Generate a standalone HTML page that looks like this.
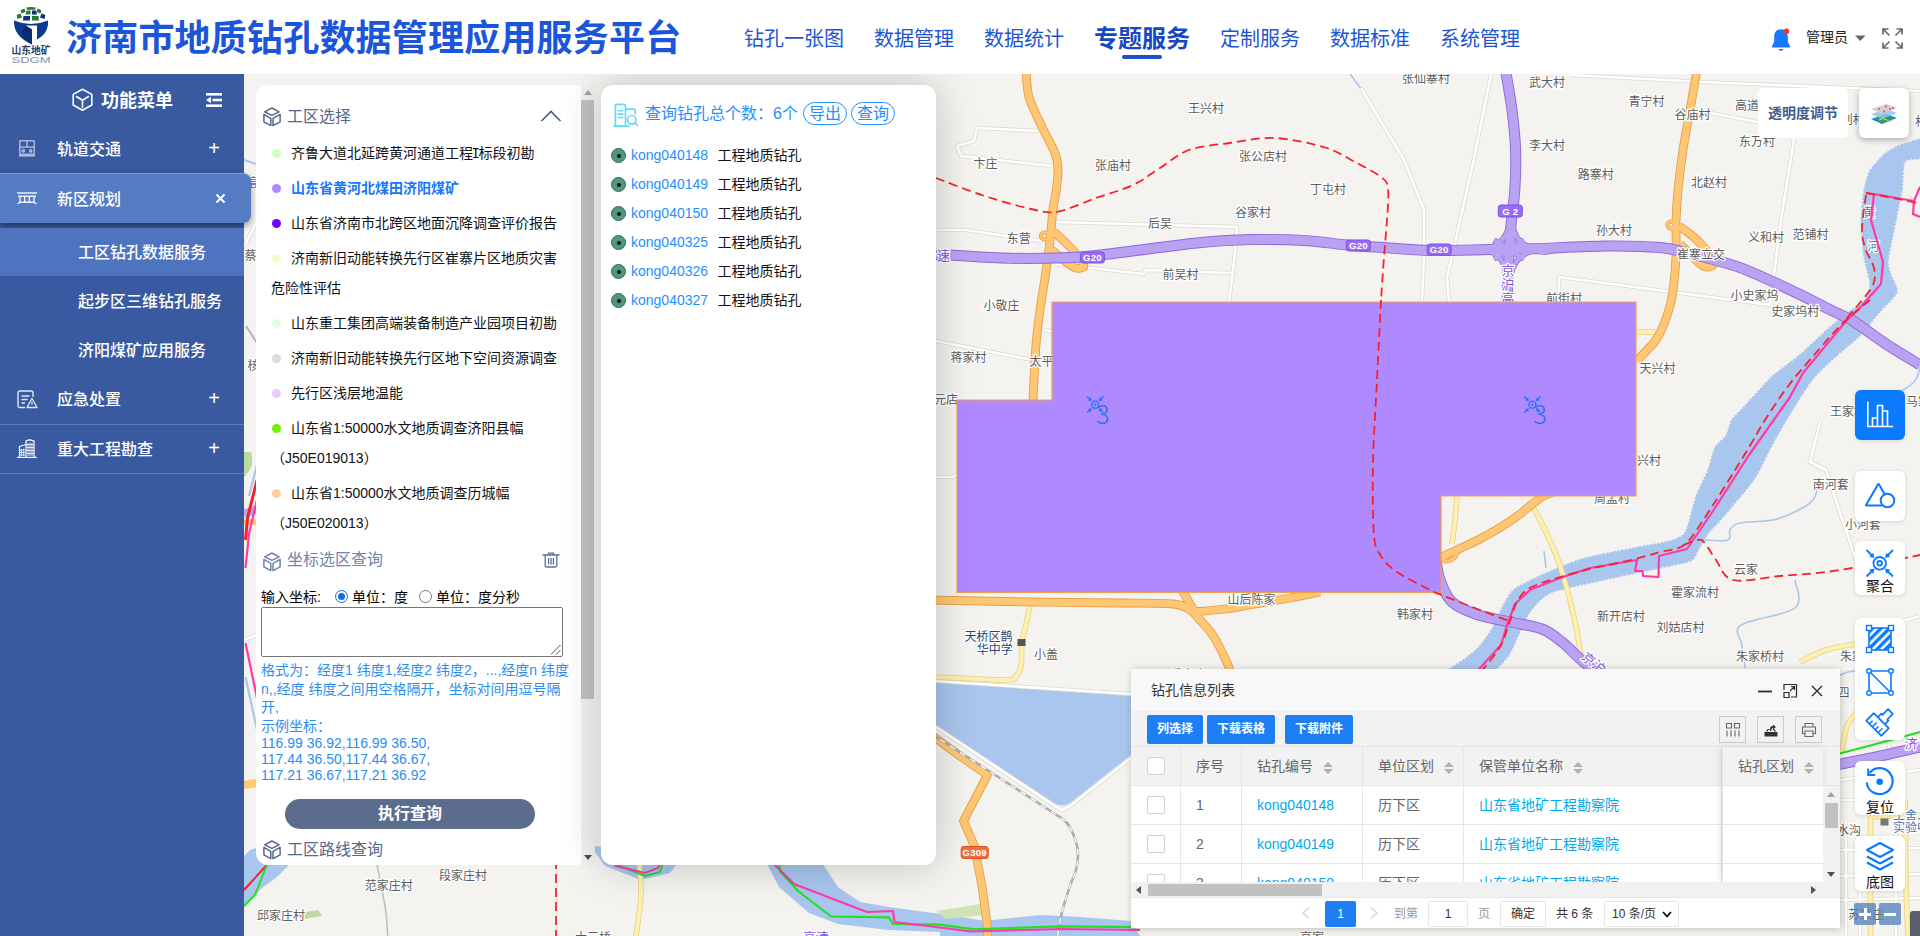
<!DOCTYPE html>
<html lang="zh-CN">
<head>
<meta charset="utf-8">
<title>济南市地质钻孔数据管理应用服务平台</title>
<style>
*{box-sizing:border-box;margin:0;padding:0}
html,body{width:1920px;height:936px;overflow:hidden;background:#f5f3ef;font-family:"Liberation Sans","Noto Sans CJK SC",sans-serif;color:#222}
#map{position:absolute;left:0;top:0;width:1920px;height:936px;z-index:0}
#map text{font-family:"Liberation Sans","Noto Sans CJK SC",sans-serif}
/* header */
#hdr{position:absolute;left:0;top:0;width:1920px;height:74px;background:#fff;z-index:30}
#title{position:absolute;left:66px;top:12px;font-size:36px;font-weight:700;color:#1b55d9;letter-spacing:.2px;white-space:nowrap;line-height:54px}
#nav{position:absolute;left:744px;top:0;height:74px;white-space:nowrap}
#nav span{position:absolute;top:24px;font-size:20px;line-height:30px;color:#1d55cf;white-space:nowrap}
#nav span.on{font-size:24px;font-weight:700;top:24px;color:#1548c4}
#nav i{position:absolute;left:378px;top:55px;width:40px;height:4px;background:#1a50d0;border-radius:2px}
#user{position:absolute;left:1806px;top:27px;font-size:14px;line-height:20px;color:#222}
/* sidebar */
#side{position:absolute;left:0;top:74px;width:244px;height:862px;background:#395aa0;z-index:20;color:#fff}
#side .t{position:absolute;white-space:nowrap;font-size:16px;line-height:24px;color:#fff;font-weight:500}
#side .pl{position:absolute;left:204px;font-size:20px;line-height:24px;width:20px;text-align:center;color:#fff;font-weight:400}
#side .sep{position:absolute;left:0;width:244px;height:1px;background:#5f7bb8}
#act{position:absolute;left:0;top:99px;width:251px;height:50px;background:#557bc3;border-radius:0 8px 8px 0;box-shadow:0 3px 6px rgba(0,0,0,.4);border-top:1px solid #7f98cf}
#sub{position:absolute;left:0;top:154px;width:244px;height:48px;background:#4f74bf}
/* panels */
.panel{position:absolute;background:#fff;z-index:10}
#p1{left:256px;top:85px;width:325px;height:780px;border-radius:12px 0 0 12px;overflow:hidden}
#sb1{position:absolute;left:581px;top:85px;width:14px;height:780px;background:#f1f1f1;z-index:10}
#sb1 b{position:absolute;left:0;top:15px;width:13px;height:599px;background:#c1c1c1}
#p2{left:601px;top:85px;width:335px;height:780px;border-radius:12px;box-shadow:0 0 42px rgba(0,0,0,.21)}

/* p1 */
#p1 .h{position:absolute;left:0;height:24px;font-size:16px;line-height:24px;color:#566789;white-space:nowrap}
#p1 .h svg{position:absolute;left:7px;top:2px}
#p1 .h span{position:absolute;left:31px;top:0}
#lst{position:absolute;left:15px;top:53px;width:292px;font-size:14px;line-height:30px;color:#111;list-style:none}
#lst li{margin-bottom:5px}
#lst li i{display:inline-block;width:9px;height:9px;border-radius:50%;margin:0 10px 0 1px;vertical-align:0}
#lst li.on{color:#1677ff;font-weight:700}
#coord{position:absolute;left:5px;top:502px;font-size:14px;line-height:20px;color:#000;white-space:nowrap}
.rad{display:inline-block;width:13px;height:13px;border:1px solid #767676;border-radius:50%;vertical-align:-1px;margin:0 4px 0 6px;background:#fff;position:relative}
.rad.on{border-color:#0b6fe8}
.rad.on:after{content:"";position:absolute;left:2px;top:2px;width:7px;height:7px;border-radius:50%;background:#0b6fe8}
#ta{position:absolute;left:5px;top:522px;width:302px;height:50px;border:1px solid #767676;border-radius:2px;background:#fff}
#hint{position:absolute;left:5px;top:576px;width:312px;font-size:14px;line-height:18.5px;color:#2d8cf0}
#hint p{line-height:16px}
#go{position:absolute;left:29px;top:714px;width:250px;height:30px;border-radius:15px;background:#5c6c8d;color:#fff;font-size:16px;font-weight:700;text-align:center;line-height:30px}

#sb1:before,#sb1:after{content:"";position:absolute;left:3px;border:4px solid transparent}
#sb1:before{top:1px;border-bottom:5px solid #a3a3a3;border-top:0;top:5px}
#sb1:after{bottom:5px;border-top:5px solid #505050;border-bottom:0}
/* p2 */
#p2 .hd{position:absolute;left:44px;top:17px;font-size:16px;line-height:24px;color:#1e90ff;white-space:nowrap}
#p2 .pill{position:absolute;top:17px;width:44px;height:23px;border:1px solid #1e90ff;border-radius:12px;color:#1e90ff;font-size:16px;line-height:21px;text-align:center}
#p2 .r{position:absolute;left:10px;height:20px;font-size:14px;line-height:20px;white-space:nowrap;color:#111}
#p2 .r i{position:absolute;left:0;top:3px;width:15px;height:15px;border-radius:50%;background:#4f9a7c;border:1px solid #356b55}
#p2 .r i:after{content:"";position:absolute;left:4.5px;top:4.5px;width:4px;height:4px;border-radius:50%;background:#0a0a0a}
#p2 .r a{position:absolute;left:20px;color:#1e90ff}
#p2 .r span{position:absolute;left:106.5px}

/* table layer */
#tb{position:absolute;left:1131px;top:669px;width:709px;height:259px;background:#fff;z-index:12;box-shadow:1px 1px 8px rgba(0,0,0,.22);font-size:14px;color:#666;overflow:hidden}
#tb .ttl{position:absolute;left:0;top:0;width:709px;height:43px;background:#f8f8f8;border-bottom:1px solid #eee;color:#333;font-size:14px;line-height:42px;padding-left:20px}
#tb .bar{position:absolute;left:0;top:43px;width:709px;height:35px;background:#f2f2f2;border-bottom:1px solid #e6e6e6}
#tb .btn{position:absolute;top:3px;height:29px;background:#1e7ff5;color:#fff;font-size:12px;font-weight:700;line-height:29px;text-align:center;border-radius:2px}
#tb .ib{position:absolute;top:4px;width:27px;height:27px;border:1px solid #ccc;background:#f2f2f2}
#tb .ib svg{position:absolute;left:5px;top:5px}
#tb .th{position:absolute;left:0;top:78px;width:709px;height:39px;background:#f2f2f2;border-bottom:1px solid #e6e6e6}
#tb .c{position:absolute;top:0;height:38px;border-right:1px solid #e6e6e6;line-height:38px;padding-left:15px;white-space:nowrap;overflow:hidden}
#tb .row{position:absolute;left:0;width:692px;height:39px;border-bottom:1px solid #e6e6e6;background:#fff}
#tb .ck{position:absolute;left:16px;top:10px;width:18px;height:18px;border:1px solid #d2d2d2;border-radius:2px;background:#fff}
#tb .bl{color:#01aaed}
#tb .srt{display:inline-block;position:relative;width:10px;height:16px;margin-left:10px;vertical-align:-5px}
#tb .srt:before,#tb .srt:after{content:"";position:absolute;left:0;border:5px solid transparent}
#tb .srt:before{top:-3px;border-bottom-color:#b2b2b2}
#tb .srt:after{top:9px;border-top-color:#b2b2b2}
#tb .fx{position:absolute;left:591px;top:78px;width:101px;height:135px;background:#fff;box-shadow:-1px 0 8px rgba(0,0,0,.12);border-left:1px solid #e6e6e6}
#tb .vs{position:absolute;left:692px;top:117px;width:17px;height:96px;background:#f1f1f1}
#tb .vs b{position:absolute;left:2px;top:17px;width:13px;height:25px;background:#c1c1c1}
#tb .hs{position:absolute;left:0;top:213px;width:709px;height:16px;background:#f1f1f1}
#tb .hs b{position:absolute;left:17px;top:2px;width:174px;height:12px;background:#c1c1c1}
#tb .pg{position:absolute;left:0;top:228px;width:709px;height:30px;background:#fff;font-size:12px;color:#333;border-top:1px solid #e6e6e6}
#tb .pg span,#tb .pg div{position:absolute;top:3px;height:26px;line-height:26px;white-space:nowrap}
.tri{position:absolute;width:0;height:0;border:4px solid transparent}

/* tools */
.tl{position:absolute;left:1855px;width:50px;background:#fff;border-radius:6px;z-index:11;box-shadow:0 1px 4px rgba(0,0,0,.12)}
.tl svg{position:absolute;left:0;top:0}
.tl em{position:absolute;left:0;width:50px;text-align:center;font-style:normal;font-size:14px;line-height:16px;color:#111}
#opa{position:absolute;left:1758px;top:88px;width:90px;height:50px;background:#fff;border-radius:5px;z-index:11;font-size:14px;font-weight:700;color:#3f5d8c;line-height:50px;text-align:center}
.zm{position:absolute;top:903px;width:22px;height:22px;background:rgba(92,134,190,.82);z-index:11;border-radius:2px}
.zm:before{content:"";position:absolute;left:5px;top:9.500px;width:12px;height:3px;background:#fff}
.zm.p:after{content:"";position:absolute;left:9.5px;top:5px;width:3px;height:12px;background:#fff}
</style>
</head>
<body>
<svg id="map" width="1920" height="936" viewBox="0 0 1920 936">
<rect width="1920" height="936" fill="#f5f3ef"/>
<!--MAP-->
<path d="M1920.0 140.0 C1917.4 140.8 1902.1 145.2 1898.0 147.0 C1893.9 148.8 1888.2 152.2 1885.0 155.0 C1881.8 157.8 1873.3 166.9 1871.0 171.0 C1868.7 175.1 1866.0 184.3 1865.0 190.0 C1864.0 195.7 1862.0 212.2 1862.0 220.0 C1862.0 227.8 1864.0 249.5 1865.0 257.0 C1866.0 264.5 1870.9 279.0 1871.0 284.0 C1871.1 289.0 1869.0 296.3 1866.0 300.0 C1863.0 303.7 1849.7 312.3 1845.0 316.0 C1840.3 319.7 1831.2 327.3 1826.0 332.0 C1820.8 336.7 1806.2 350.8 1800.0 356.0 C1793.8 361.2 1779.2 371.3 1773.0 377.0 C1766.8 382.7 1751.7 400.0 1747.0 405.0 C1742.3 410.0 1735.3 416.4 1733.0 420.0 C1730.7 423.6 1729.0 432.7 1727.0 436.0 C1725.0 439.3 1718.1 444.0 1716.0 448.0 C1713.9 452.0 1711.2 464.3 1709.0 470.0 C1706.8 475.7 1699.7 489.6 1697.0 497.0 C1694.3 504.4 1689.2 527.8 1686.0 533.0 C1682.8 538.2 1675.5 540.2 1670.0 542.0 C1664.5 543.8 1649.3 545.9 1639.0 548.0 C1628.7 550.1 1593.3 556.7 1582.0 560.0 C1570.7 563.3 1549.8 572.5 1542.0 576.0 C1534.2 579.5 1519.3 586.7 1515.0 590.0 C1510.7 593.3 1507.6 599.5 1505.0 604.0 C1502.4 608.5 1495.8 624.1 1493.0 629.0 C1490.2 633.9 1483.8 642.7 1481.0 646.0 C1478.2 649.3 1472.3 654.4 1469.0 657.0 C1465.7 659.6 1456.8 665.3 1453.0 668.0 C1449.2 670.7 1433.1 678.6 1436.0 680.0 C1438.9 681.4 1470.9 681.5 1478.0 680.0 C1485.1 678.5 1493.4 670.1 1497.0 667.0 C1500.6 663.9 1506.1 657.9 1509.0 653.0 C1511.9 648.1 1519.5 630.0 1522.0 625.0 C1524.5 620.0 1526.7 613.9 1530.0 610.0 C1533.3 606.1 1542.0 595.5 1550.0 592.0 C1558.0 588.5 1586.8 582.8 1599.0 580.0 C1611.2 577.2 1644.4 570.3 1655.0 568.0 C1665.6 565.7 1685.0 562.3 1690.0 560.0 C1695.0 557.7 1695.9 551.3 1698.0 548.0 C1700.1 544.7 1705.4 535.4 1708.0 532.0 C1710.6 528.6 1714.8 525.2 1720.0 519.0 C1725.2 512.8 1746.3 488.9 1753.0 479.0 C1759.7 469.1 1770.3 445.4 1777.0 434.0 C1783.7 422.6 1803.1 390.2 1810.0 381.0 C1816.9 371.8 1830.4 360.2 1836.0 355.0 C1841.6 349.8 1852.9 341.2 1858.0 336.0 C1863.1 330.8 1875.6 315.1 1880.0 310.0 C1884.4 304.9 1894.8 296.1 1896.0 292.0 C1897.2 287.9 1891.0 278.5 1890.0 275.0 C1889.0 271.5 1886.7 267.2 1887.0 262.0 C1887.3 256.8 1891.4 238.4 1893.0 230.0 C1894.6 221.6 1899.7 198.1 1901.0 190.0 C1902.3 181.9 1901.8 164.7 1904.0 161.0 C1906.2 157.3 1918.1 158.3 1920.0 158.0 Z" fill="#a9c6ee" stroke="#a9c6ee" stroke-width="3.400" stroke-dasharray="0.1 3.600" stroke-linecap="round" stroke-linejoin="round"/>
<path d="M930 682 L1131.500 695.400 L1131.500 754.500 L1070 803 Q1062 808 1054 803 L930 722 Z" fill="#a9c6ee"/>
<path d="M765 860 L779 887 L809 913 L838 924 L889 930 L940 932 L940 936 L1140 936 L1131 921 L1080 917 L1041 915 L1010 918 L985 921 L950 915 L933 913 L889 907 L860 902 L838 887 L820 860 Z" fill="#a9c6ee"/>
<path d="M590 845 L605 866 L641 880 L670 873 L680 860 Z" fill="#a9c6ee"/>
<path d="M244 856 L250 850 L262 846 L292 862 L277 877 L262 888 L247 903 L244 906 Z" fill="#a9c6ee"/>
<path d="M1920.0 367.0 C1919.2 369.3 1918.3 376.8 1915.0 381.0 C1911.7 385.2 1902.5 390.2 1900.0 392.0" fill="none" stroke="#a9c6ee" stroke-width="1.600"/>
<path d="M1818.0 487.0 C1816.7 489.7 1816.8 497.7 1810.0 503.0 C1803.2 508.3 1788.7 515.7 1777.0 519.0 C1765.3 522.3 1747.8 521.2 1740.0 523.0 C1732.2 524.8 1732.0 527.2 1730.0 530.0 C1728.0 532.8 1732.2 538.3 1728.0 540.0 C1723.8 541.7 1708.8 540.0 1705.0 540.0" fill="none" stroke="#a9c6ee" stroke-width="1.600"/>
<path d="M1795.0 580.0 C1795.0 584.7 1804.0 600.5 1795.0 608.0 C1786.0 615.5 1749.8 618.8 1741.0 625.0 C1732.2 631.2 1741.3 637.8 1742.0 645.0 C1742.7 652.2 1744.5 664.2 1745.0 668.0" fill="none" stroke="#a9c6ee" stroke-width="1.600"/>
<path d="M1544.0 551.0 L1546.0 568.0" fill="none" stroke="#a9c6ee" stroke-width="1.600"/>
<path d="M1838.0 676.0 C1839.7 675.3 1844.7 672.8 1848.0 672.0 C1851.3 671.2 1856.3 671.2 1858.0 671.0" fill="none" stroke="#a9c6ee" stroke-width="1.600"/>
<path d="M1350.0 74.0 C1351.0 75.3 1354.0 79.3 1356.0 82.0 C1358.0 84.7 1361.0 88.7 1362.0 90.0" fill="none" stroke="#a9c6ee" stroke-width="1.600"/>
<path d="M257 465 L249 496 M245.500 677 L257 730" fill="none" stroke="#a9c6ee" stroke-width="2.200"/>
<path d="M244 160 L256 164" stroke="#a9c6ee" stroke-width="2"/>
<path d="M936 911 L981 904 L985 915 L946 919 Z" fill="#cfe3b4"/>
<path d="M300 913 L318 910 L322 916 L304 919 Z" fill="#bfd9a0"/>
<path d="M244 452 L251 452 Q254 462 250 470 L244 477 Z" fill="#bcd9a0"/>
<path d="M977.0 128.0 L1040.0 131.0" fill="none" stroke="#dcdad2" stroke-width="4.2" stroke-linecap="butt" stroke-linejoin="round"/>
<path d="M977.0 128.0 L974.0 141.0 L957.0 146.0 L961.0 156.0 L1052.0 166.0" fill="none" stroke="#dcdad2" stroke-width="4.2" stroke-linecap="butt" stroke-linejoin="round"/>
<path d="M1055.0 222.0 L1237.0 227.0 L1234.0 262.0 L1229.0 302.0" fill="none" stroke="#dcdad2" stroke-width="4.2" stroke-linecap="butt" stroke-linejoin="round"/>
<path d="M936.0 230.0 L965.0 230.0 L1042.0 241.0" fill="none" stroke="#dcdad2" stroke-width="4.2" stroke-linecap="butt" stroke-linejoin="round"/>
<path d="M1055.0 264.0 L1144.0 274.0 L1145.0 270.0 L1232.0 273.0" fill="none" stroke="#dcdad2" stroke-width="4.2" stroke-linecap="butt" stroke-linejoin="round"/>
<path d="M1361.0 88.0 L1380.0 120.0 L1403.0 158.0 L1414.0 185.0 L1424.0 209.0 L1424.0 257.0 L1421.0 320.0" fill="none" stroke="#dcdad2" stroke-width="4.2" stroke-linecap="butt" stroke-linejoin="round"/>
<path d="M1570.0 75.0 L1703.0 82.0 L1920.0 91.0" fill="none" stroke="#dcdad2" stroke-width="4.2" stroke-linecap="butt" stroke-linejoin="round"/>
<path d="M1711.0 113.0 L1762.0 123.0 L1794.0 139.0" fill="none" stroke="#dcdad2" stroke-width="4.2" stroke-linecap="butt" stroke-linejoin="round"/>
<path d="M1794.0 139.0 L1781.0 220.0 L1770.0 305.0 L1559.0 277.0 L1559.0 300.0" fill="none" stroke="#dcdad2" stroke-width="4.2" stroke-linecap="butt" stroke-linejoin="round"/>
<path d="M1491.0 75.0 L1473.0 163.0 L1447.0 278.0 L1449.0 302.0" fill="none" stroke="#dcdad2" stroke-width="4.2" stroke-linecap="butt" stroke-linejoin="round"/>
<path d="M1420.0 201.0 L1424.0 209.0" fill="none" stroke="#dcdad2" stroke-width="4.2" stroke-linecap="butt" stroke-linejoin="round"/>
<path d="M936.0 341.0 L1032.0 360.0" fill="none" stroke="#dcdad2" stroke-width="4.2" stroke-linecap="butt" stroke-linejoin="round"/>
<path d="M1046.0 330.0 L1052.0 332.0" fill="none" stroke="#dcdad2" stroke-width="4.2" stroke-linecap="butt" stroke-linejoin="round"/>
<path d="M936.0 477.0 L954.0 477.0 L957.0 474.0" fill="none" stroke="#dcdad2" stroke-width="4.2" stroke-linecap="butt" stroke-linejoin="round"/>
<path d="M936.0 681.0 L1131.0 694.0" fill="none" stroke="#dcdad2" stroke-width="4.2" stroke-linecap="butt" stroke-linejoin="round"/>
<path d="M936.0 727.0 L1055.0 806.0 L1062.0 810.0 L1070.0 806.0 L1131.0 758.0" fill="none" stroke="#dcdad2" stroke-width="4.2" stroke-linecap="butt" stroke-linejoin="round"/>
<path d="M1820.0 422.0 L1810.0 462.0 L1826.0 470.0 L1842.0 519.0 L1856.0 560.0" fill="none" stroke="#dcdad2" stroke-width="4.2" stroke-linecap="butt" stroke-linejoin="round"/>
<path d="M1903.0 621.0 L1920.0 616.0" fill="none" stroke="#dcdad2" stroke-width="4.2" stroke-linecap="butt" stroke-linejoin="round"/>
<path d="M1840.0 850.0 L1920.0 848.0" fill="none" stroke="#dcdad2" stroke-width="4.2" stroke-linecap="butt" stroke-linejoin="round"/>
<path d="M1840.0 876.0 L1920.0 874.0" fill="none" stroke="#dcdad2" stroke-width="4.2" stroke-linecap="butt" stroke-linejoin="round"/>
<path d="M1840.0 900.0 L1920.0 898.0" fill="none" stroke="#dcdad2" stroke-width="4.2" stroke-linecap="butt" stroke-linejoin="round"/>
<path d="M1846.0 820.0 L1846.0 936.0" fill="none" stroke="#dcdad2" stroke-width="4.2" stroke-linecap="butt" stroke-linejoin="round"/>
<path d="M1860.0 850.0 L1860.0 936.0" fill="none" stroke="#dcdad2" stroke-width="4.2" stroke-linecap="butt" stroke-linejoin="round"/>
<path d="M1896.0 830.0 L1896.0 936.0" fill="none" stroke="#dcdad2" stroke-width="4.2" stroke-linecap="butt" stroke-linejoin="round"/>
<path d="M1840.0 800.0 L1874.0 800.0" fill="none" stroke="#dcdad2" stroke-width="4.2" stroke-linecap="butt" stroke-linejoin="round"/>
<path d="M1840.0 780.0 L1920.0 770.0" fill="none" stroke="#dcdad2" stroke-width="4.2" stroke-linecap="butt" stroke-linejoin="round"/>
<path d="M1886.0 700.0 L1890.0 760.0" fill="none" stroke="#dcdad2" stroke-width="4.2" stroke-linecap="butt" stroke-linejoin="round"/>
<path d="M256.0 223.0 L246.0 243.0" fill="none" stroke="#dcdad2" stroke-width="4.2" stroke-linecap="butt" stroke-linejoin="round"/>
<path d="M244.0 640.0 L257.0 635.0" fill="none" stroke="#dcdad2" stroke-width="4.2" stroke-linecap="butt" stroke-linejoin="round"/>
<path d="M977.0 128.0 L1040.0 131.0" fill="none" stroke="#ffffff" stroke-width="2.6" stroke-linecap="butt" stroke-linejoin="round"/>
<path d="M977.0 128.0 L974.0 141.0 L957.0 146.0 L961.0 156.0 L1052.0 166.0" fill="none" stroke="#ffffff" stroke-width="2.6" stroke-linecap="butt" stroke-linejoin="round"/>
<path d="M1055.0 222.0 L1237.0 227.0 L1234.0 262.0 L1229.0 302.0" fill="none" stroke="#ffffff" stroke-width="2.6" stroke-linecap="butt" stroke-linejoin="round"/>
<path d="M936.0 230.0 L965.0 230.0 L1042.0 241.0" fill="none" stroke="#ffffff" stroke-width="2.6" stroke-linecap="butt" stroke-linejoin="round"/>
<path d="M1055.0 264.0 L1144.0 274.0 L1145.0 270.0 L1232.0 273.0" fill="none" stroke="#ffffff" stroke-width="2.6" stroke-linecap="butt" stroke-linejoin="round"/>
<path d="M1361.0 88.0 L1380.0 120.0 L1403.0 158.0 L1414.0 185.0 L1424.0 209.0 L1424.0 257.0 L1421.0 320.0" fill="none" stroke="#ffffff" stroke-width="2.6" stroke-linecap="butt" stroke-linejoin="round"/>
<path d="M1570.0 75.0 L1703.0 82.0 L1920.0 91.0" fill="none" stroke="#ffffff" stroke-width="2.6" stroke-linecap="butt" stroke-linejoin="round"/>
<path d="M1711.0 113.0 L1762.0 123.0 L1794.0 139.0" fill="none" stroke="#ffffff" stroke-width="2.6" stroke-linecap="butt" stroke-linejoin="round"/>
<path d="M1794.0 139.0 L1781.0 220.0 L1770.0 305.0 L1559.0 277.0 L1559.0 300.0" fill="none" stroke="#ffffff" stroke-width="2.6" stroke-linecap="butt" stroke-linejoin="round"/>
<path d="M1491.0 75.0 L1473.0 163.0 L1447.0 278.0 L1449.0 302.0" fill="none" stroke="#ffffff" stroke-width="2.6" stroke-linecap="butt" stroke-linejoin="round"/>
<path d="M1420.0 201.0 L1424.0 209.0" fill="none" stroke="#ffffff" stroke-width="2.6" stroke-linecap="butt" stroke-linejoin="round"/>
<path d="M936.0 341.0 L1032.0 360.0" fill="none" stroke="#ffffff" stroke-width="2.6" stroke-linecap="butt" stroke-linejoin="round"/>
<path d="M1046.0 330.0 L1052.0 332.0" fill="none" stroke="#ffffff" stroke-width="2.6" stroke-linecap="butt" stroke-linejoin="round"/>
<path d="M936.0 477.0 L954.0 477.0 L957.0 474.0" fill="none" stroke="#ffffff" stroke-width="2.6" stroke-linecap="butt" stroke-linejoin="round"/>
<path d="M936.0 681.0 L1131.0 694.0" fill="none" stroke="#ffffff" stroke-width="2.6" stroke-linecap="butt" stroke-linejoin="round"/>
<path d="M936.0 727.0 L1055.0 806.0 L1062.0 810.0 L1070.0 806.0 L1131.0 758.0" fill="none" stroke="#ffffff" stroke-width="2.6" stroke-linecap="butt" stroke-linejoin="round"/>
<path d="M1820.0 422.0 L1810.0 462.0 L1826.0 470.0 L1842.0 519.0 L1856.0 560.0" fill="none" stroke="#ffffff" stroke-width="2.6" stroke-linecap="butt" stroke-linejoin="round"/>
<path d="M1903.0 621.0 L1920.0 616.0" fill="none" stroke="#ffffff" stroke-width="2.6" stroke-linecap="butt" stroke-linejoin="round"/>
<path d="M1840.0 850.0 L1920.0 848.0" fill="none" stroke="#ffffff" stroke-width="2.6" stroke-linecap="butt" stroke-linejoin="round"/>
<path d="M1840.0 876.0 L1920.0 874.0" fill="none" stroke="#ffffff" stroke-width="2.6" stroke-linecap="butt" stroke-linejoin="round"/>
<path d="M1840.0 900.0 L1920.0 898.0" fill="none" stroke="#ffffff" stroke-width="2.6" stroke-linecap="butt" stroke-linejoin="round"/>
<path d="M1846.0 820.0 L1846.0 936.0" fill="none" stroke="#ffffff" stroke-width="2.6" stroke-linecap="butt" stroke-linejoin="round"/>
<path d="M1860.0 850.0 L1860.0 936.0" fill="none" stroke="#ffffff" stroke-width="2.6" stroke-linecap="butt" stroke-linejoin="round"/>
<path d="M1896.0 830.0 L1896.0 936.0" fill="none" stroke="#ffffff" stroke-width="2.6" stroke-linecap="butt" stroke-linejoin="round"/>
<path d="M1840.0 800.0 L1874.0 800.0" fill="none" stroke="#ffffff" stroke-width="2.6" stroke-linecap="butt" stroke-linejoin="round"/>
<path d="M1840.0 780.0 L1920.0 770.0" fill="none" stroke="#ffffff" stroke-width="2.6" stroke-linecap="butt" stroke-linejoin="round"/>
<path d="M1886.0 700.0 L1890.0 760.0" fill="none" stroke="#ffffff" stroke-width="2.6" stroke-linecap="butt" stroke-linejoin="round"/>
<path d="M256.0 223.0 L246.0 243.0" fill="none" stroke="#ffffff" stroke-width="2.6" stroke-linecap="butt" stroke-linejoin="round"/>
<path d="M244.0 640.0 L257.0 635.0" fill="none" stroke="#ffffff" stroke-width="2.6" stroke-linecap="butt" stroke-linejoin="round"/>
<path d="M1030.0 606.0 C1029.3 609.2 1027.3 619.0 1026.0 625.0 C1024.7 631.0 1022.8 635.2 1022.0 642.0 C1021.2 648.8 1022.0 660.3 1021.0 666.0 C1020.0 671.7 1018.5 673.7 1016.0 676.0 C1013.5 678.3 1019.3 679.8 1006.0 680.0 C992.7 680.2 947.7 677.5 936.0 677.0" fill="none" stroke="#e6d28a" stroke-width="5.6" stroke-linecap="butt" stroke-linejoin="round"/>
<path d="M1457.0 497.0 C1456.7 500.8 1455.8 512.2 1455.0 520.0 C1454.2 527.8 1452.5 540.0 1452.0 544.0" fill="none" stroke="#e6d28a" stroke-width="5.6" stroke-linecap="butt" stroke-linejoin="round"/>
<path d="M1530.0 501.0 C1532.5 505.8 1540.3 520.2 1545.0 530.0 C1549.7 539.8 1553.8 548.3 1558.0 560.0 C1562.2 571.7 1566.7 587.2 1570.0 600.0 C1573.3 612.8 1576.0 625.7 1578.0 637.0 C1580.0 648.3 1581.3 662.8 1582.0 668.0" fill="none" stroke="#e6d28a" stroke-width="5.6" stroke-linecap="butt" stroke-linejoin="round"/>
<path d="M1636.0 332.0 L1656.0 332.0" fill="none" stroke="#e6d28a" stroke-width="5.6" stroke-linecap="butt" stroke-linejoin="round"/>
<path d="M639.0 860.0 C639.3 865.8 641.5 882.3 641.0 895.0 C640.5 907.7 636.8 929.2 636.0 936.0" fill="none" stroke="#e6d28a" stroke-width="5.6" stroke-linecap="butt" stroke-linejoin="round"/>
<path d="M1870.5 816.0 L1870.5 940.0" fill="none" stroke="#e6d28a" stroke-width="5.6" stroke-linecap="butt" stroke-linejoin="round"/>
<path d="M1905.0 800.0 C1905.2 813.3 1905.5 856.7 1906.0 880.0 C1906.5 903.3 1907.7 930.0 1908.0 940.0" fill="none" stroke="#e6d28a" stroke-width="5.6" stroke-linecap="butt" stroke-linejoin="round"/>
<path d="M1800.0 662.0 C1804.3 660.0 1816.7 653.0 1826.0 650.0 C1835.3 647.0 1851.0 645.0 1856.0 644.0" fill="none" stroke="#e6d28a" stroke-width="5.6" stroke-linecap="butt" stroke-linejoin="round"/>
<path d="M1858.0 711.0 C1856.2 713.5 1849.7 719.2 1847.0 726.0 C1844.3 732.8 1842.8 747.7 1842.0 752.0" fill="none" stroke="#e6d28a" stroke-width="5.6" stroke-linecap="butt" stroke-linejoin="round"/>
<path d="M1870.5 817.0 L1920.0 815.0" fill="none" stroke="#e6d28a" stroke-width="5.6" stroke-linecap="butt" stroke-linejoin="round"/>
<path d="M1030.0 606.0 C1029.3 609.2 1027.3 619.0 1026.0 625.0 C1024.7 631.0 1022.8 635.2 1022.0 642.0 C1021.2 648.8 1022.0 660.3 1021.0 666.0 C1020.0 671.7 1018.5 673.7 1016.0 676.0 C1013.5 678.3 1019.3 679.8 1006.0 680.0 C992.7 680.2 947.7 677.5 936.0 677.0" fill="none" stroke="#fdf0b0" stroke-width="4.0" stroke-linecap="butt" stroke-linejoin="round"/>
<path d="M1457.0 497.0 C1456.7 500.8 1455.8 512.2 1455.0 520.0 C1454.2 527.8 1452.5 540.0 1452.0 544.0" fill="none" stroke="#fdf0b0" stroke-width="4.0" stroke-linecap="butt" stroke-linejoin="round"/>
<path d="M1530.0 501.0 C1532.5 505.8 1540.3 520.2 1545.0 530.0 C1549.7 539.8 1553.8 548.3 1558.0 560.0 C1562.2 571.7 1566.7 587.2 1570.0 600.0 C1573.3 612.8 1576.0 625.7 1578.0 637.0 C1580.0 648.3 1581.3 662.8 1582.0 668.0" fill="none" stroke="#fdf0b0" stroke-width="4.0" stroke-linecap="butt" stroke-linejoin="round"/>
<path d="M1636.0 332.0 L1656.0 332.0" fill="none" stroke="#fdf0b0" stroke-width="4.0" stroke-linecap="butt" stroke-linejoin="round"/>
<path d="M639.0 860.0 C639.3 865.8 641.5 882.3 641.0 895.0 C640.5 907.7 636.8 929.2 636.0 936.0" fill="none" stroke="#fdf0b0" stroke-width="4.0" stroke-linecap="butt" stroke-linejoin="round"/>
<path d="M1870.5 816.0 L1870.5 940.0" fill="none" stroke="#fdf0b0" stroke-width="4.0" stroke-linecap="butt" stroke-linejoin="round"/>
<path d="M1905.0 800.0 C1905.2 813.3 1905.5 856.7 1906.0 880.0 C1906.5 903.3 1907.7 930.0 1908.0 940.0" fill="none" stroke="#fdf0b0" stroke-width="4.0" stroke-linecap="butt" stroke-linejoin="round"/>
<path d="M1800.0 662.0 C1804.3 660.0 1816.7 653.0 1826.0 650.0 C1835.3 647.0 1851.0 645.0 1856.0 644.0" fill="none" stroke="#fdf0b0" stroke-width="4.0" stroke-linecap="butt" stroke-linejoin="round"/>
<path d="M1858.0 711.0 C1856.2 713.5 1849.7 719.2 1847.0 726.0 C1844.3 732.8 1842.8 747.7 1842.0 752.0" fill="none" stroke="#fdf0b0" stroke-width="4.0" stroke-linecap="butt" stroke-linejoin="round"/>
<path d="M1870.5 817.0 L1920.0 815.0" fill="none" stroke="#fdf0b0" stroke-width="4.0" stroke-linecap="butt" stroke-linejoin="round"/>
<path d="M1026.0 70.0 C1026.5 74.5 1026.3 87.5 1029.0 97.0 C1031.7 106.5 1037.7 117.7 1042.0 127.0 C1046.3 136.3 1052.3 145.8 1055.0 153.0 C1057.7 160.2 1057.8 163.5 1058.0 170.0 C1058.2 176.5 1056.8 185.5 1056.0 192.0 C1055.2 198.5 1054.0 200.8 1053.0 209.0 C1052.0 217.2 1051.3 229.5 1050.0 241.0 C1048.7 252.5 1046.7 266.5 1045.0 278.0 C1043.3 289.5 1041.5 298.8 1040.0 310.0 C1038.5 321.2 1037.2 330.0 1036.0 345.0 C1034.8 360.0 1033.5 390.8 1033.0 400.0" fill="none" stroke="#e3a046" stroke-width="8.8" stroke-linecap="butt" stroke-linejoin="round"/>
<path d="M1054.0 232.0 C1056.0 233.8 1062.0 239.0 1066.0 243.0 C1070.0 247.0 1075.0 252.2 1078.0 256.0 C1081.0 259.8 1084.3 264.0 1084.0 266.0 C1083.7 268.0 1079.0 268.7 1076.0 268.0 C1073.0 267.3 1070.0 265.0 1066.0 262.0 C1062.0 259.0 1054.3 252.0 1052.0 250.0" fill="none" stroke="#e3a046" stroke-width="8.8" stroke-linecap="butt" stroke-linejoin="round"/>
<path d="M1697.0 70.0 C1695.8 76.7 1692.3 96.7 1690.0 110.0 C1687.7 123.3 1685.0 136.7 1683.0 150.0 C1681.0 163.3 1679.2 178.0 1678.0 190.0 C1676.8 202.0 1676.3 210.8 1676.0 222.0 C1675.7 233.2 1676.7 244.5 1676.0 257.0 C1675.3 269.5 1674.0 285.8 1672.0 297.0 C1670.0 308.2 1666.7 316.8 1664.0 324.0 C1661.3 331.2 1658.8 335.7 1656.0 340.0 C1653.2 344.3 1650.2 346.5 1647.0 350.0 C1643.8 353.5 1638.7 359.2 1637.0 361.0" fill="none" stroke="#e3a046" stroke-width="8.8" stroke-linecap="butt" stroke-linejoin="round"/>
<path d="M1679.0 226.0 C1680.8 227.3 1686.5 231.2 1690.0 234.0 C1693.5 236.8 1696.3 239.0 1700.0 243.0 C1703.7 247.0 1710.0 254.2 1712.0 258.0 C1714.0 261.8 1713.5 264.7 1712.0 266.0 C1710.5 267.3 1706.3 267.7 1703.0 266.0 C1699.7 264.3 1695.8 259.7 1692.0 256.0 C1688.2 252.3 1682.0 246.0 1680.0 244.0" fill="none" stroke="#e3a046" stroke-width="8.8" stroke-linecap="butt" stroke-linejoin="round"/>
<path d="M1560.0 490.0 C1557.0 491.2 1548.7 493.0 1542.0 497.0 C1535.3 501.0 1526.8 509.0 1520.0 514.0 C1513.2 519.0 1508.0 522.7 1501.0 527.0 C1494.0 531.3 1484.7 536.5 1478.0 540.0 C1471.3 543.5 1467.3 545.0 1461.0 548.0 C1454.7 551.0 1443.5 556.3 1440.0 558.0" fill="none" stroke="#e3a046" stroke-width="8.8" stroke-linecap="butt" stroke-linejoin="round"/>
<path d="M930.0 600.0 C946.8 600.3 999.3 601.5 1031.0 602.0 C1062.7 602.5 1096.3 602.7 1120.0 603.0 C1143.7 603.3 1161.3 602.8 1173.0 604.0 C1184.7 605.2 1185.5 607.3 1190.0 610.0 C1194.5 612.7 1196.0 615.5 1200.0 620.0 C1204.0 624.5 1209.3 629.5 1214.0 637.0 C1218.7 644.5 1224.8 657.8 1228.0 665.0 C1231.2 672.2 1232.2 677.5 1233.0 680.0" fill="none" stroke="#e3a046" stroke-width="8.8" stroke-linecap="butt" stroke-linejoin="round"/>
<path d="M1194.0 612.0 C1199.2 611.5 1214.8 610.3 1225.0 609.0 C1235.2 607.7 1244.2 605.8 1255.0 604.0 C1265.8 602.2 1279.2 600.0 1290.0 598.0 C1300.8 596.0 1315.0 593.0 1320.0 592.0" fill="none" stroke="#e3a046" stroke-width="8.8" stroke-linecap="butt" stroke-linejoin="round"/>
<path d="M1182.0 590.0 C1183.3 592.3 1187.7 600.0 1190.0 604.0 C1192.3 608.0 1195.0 612.3 1196.0 614.0" fill="none" stroke="#e3a046" stroke-width="8.8" stroke-linecap="butt" stroke-linejoin="round"/>
<path d="M930.0 734.0 L960.0 756.0 L987.5 775.0 L963.5 821.0 L974.0 845.0 L978.0 865.0 L982.0 886.0 L987.0 923.0 L988.0 940.0" fill="none" stroke="#e3a046" stroke-width="8.8" stroke-linecap="butt" stroke-linejoin="round"/>
<circle cx="1044.500" cy="236" r="3.600" fill="#f5f3ef" stroke="#e3a046" stroke-width="4"/>
<circle cx="1671" cy="225" r="3.600" fill="#f5f3ef" stroke="#e3a046" stroke-width="4"/>
<ellipse cx="1449" cy="556" rx="8" ry="4.500" transform="rotate(-25 1449 556)" fill="none" stroke="#e3a046" stroke-width="4.500"/>
<path d="M244 785 L257 783" stroke="#ffc774" stroke-width="8"/>
<path d="M244 522 L257 522" stroke="#ffc774" stroke-width="6"/>
<path d="M1026.0 70.0 C1026.5 74.5 1026.3 87.5 1029.0 97.0 C1031.7 106.5 1037.7 117.7 1042.0 127.0 C1046.3 136.3 1052.3 145.8 1055.0 153.0 C1057.7 160.2 1057.8 163.5 1058.0 170.0 C1058.2 176.5 1056.8 185.5 1056.0 192.0 C1055.2 198.5 1054.0 200.8 1053.0 209.0 C1052.0 217.2 1051.3 229.5 1050.0 241.0 C1048.7 252.5 1046.7 266.5 1045.0 278.0 C1043.3 289.5 1041.5 298.8 1040.0 310.0 C1038.5 321.2 1037.2 330.0 1036.0 345.0 C1034.8 360.0 1033.5 390.8 1033.0 400.0" fill="none" stroke="#ffc774" stroke-width="7.0" stroke-linecap="butt" stroke-linejoin="round"/>
<path d="M1054.0 232.0 C1056.0 233.8 1062.0 239.0 1066.0 243.0 C1070.0 247.0 1075.0 252.2 1078.0 256.0 C1081.0 259.8 1084.3 264.0 1084.0 266.0 C1083.7 268.0 1079.0 268.7 1076.0 268.0 C1073.0 267.3 1070.0 265.0 1066.0 262.0 C1062.0 259.0 1054.3 252.0 1052.0 250.0" fill="none" stroke="#ffc774" stroke-width="7.0" stroke-linecap="butt" stroke-linejoin="round"/>
<path d="M1697.0 70.0 C1695.8 76.7 1692.3 96.7 1690.0 110.0 C1687.7 123.3 1685.0 136.7 1683.0 150.0 C1681.0 163.3 1679.2 178.0 1678.0 190.0 C1676.8 202.0 1676.3 210.8 1676.0 222.0 C1675.7 233.2 1676.7 244.5 1676.0 257.0 C1675.3 269.5 1674.0 285.8 1672.0 297.0 C1670.0 308.2 1666.7 316.8 1664.0 324.0 C1661.3 331.2 1658.8 335.7 1656.0 340.0 C1653.2 344.3 1650.2 346.5 1647.0 350.0 C1643.8 353.5 1638.7 359.2 1637.0 361.0" fill="none" stroke="#ffc774" stroke-width="7.0" stroke-linecap="butt" stroke-linejoin="round"/>
<path d="M1679.0 226.0 C1680.8 227.3 1686.5 231.2 1690.0 234.0 C1693.5 236.8 1696.3 239.0 1700.0 243.0 C1703.7 247.0 1710.0 254.2 1712.0 258.0 C1714.0 261.8 1713.5 264.7 1712.0 266.0 C1710.5 267.3 1706.3 267.7 1703.0 266.0 C1699.7 264.3 1695.8 259.7 1692.0 256.0 C1688.2 252.3 1682.0 246.0 1680.0 244.0" fill="none" stroke="#ffc774" stroke-width="7.0" stroke-linecap="butt" stroke-linejoin="round"/>
<path d="M1560.0 490.0 C1557.0 491.2 1548.7 493.0 1542.0 497.0 C1535.3 501.0 1526.8 509.0 1520.0 514.0 C1513.2 519.0 1508.0 522.7 1501.0 527.0 C1494.0 531.3 1484.7 536.5 1478.0 540.0 C1471.3 543.5 1467.3 545.0 1461.0 548.0 C1454.7 551.0 1443.5 556.3 1440.0 558.0" fill="none" stroke="#ffc774" stroke-width="7.0" stroke-linecap="butt" stroke-linejoin="round"/>
<path d="M930.0 600.0 C946.8 600.3 999.3 601.5 1031.0 602.0 C1062.7 602.5 1096.3 602.7 1120.0 603.0 C1143.7 603.3 1161.3 602.8 1173.0 604.0 C1184.7 605.2 1185.5 607.3 1190.0 610.0 C1194.5 612.7 1196.0 615.5 1200.0 620.0 C1204.0 624.5 1209.3 629.5 1214.0 637.0 C1218.7 644.5 1224.8 657.8 1228.0 665.0 C1231.2 672.2 1232.2 677.5 1233.0 680.0" fill="none" stroke="#ffc774" stroke-width="7.0" stroke-linecap="butt" stroke-linejoin="round"/>
<path d="M1194.0 612.0 C1199.2 611.5 1214.8 610.3 1225.0 609.0 C1235.2 607.7 1244.2 605.8 1255.0 604.0 C1265.8 602.2 1279.2 600.0 1290.0 598.0 C1300.8 596.0 1315.0 593.0 1320.0 592.0" fill="none" stroke="#ffc774" stroke-width="7.0" stroke-linecap="butt" stroke-linejoin="round"/>
<path d="M1182.0 590.0 C1183.3 592.3 1187.7 600.0 1190.0 604.0 C1192.3 608.0 1195.0 612.3 1196.0 614.0" fill="none" stroke="#ffc774" stroke-width="7.0" stroke-linecap="butt" stroke-linejoin="round"/>
<path d="M930.0 734.0 L960.0 756.0 L987.5 775.0 L963.5 821.0 L974.0 845.0 L978.0 865.0 L982.0 886.0 L987.0 923.0 L988.0 940.0" fill="none" stroke="#ffc774" stroke-width="7.0" stroke-linecap="butt" stroke-linejoin="round"/>
<circle cx="1044.500" cy="236" r="3.600" fill="none" stroke="#ffc774" stroke-width="2.400"/>
<circle cx="1671" cy="225" r="3.600" fill="none" stroke="#ffc774" stroke-width="2.400"/>
<ellipse cx="1449" cy="556" rx="8" ry="4.500" transform="rotate(-25 1449 556)" fill="none" stroke="#ffc774" stroke-width="3"/>
<path d="M936.0 254.5 C938.5 254.6 938.7 254.4 951.0 255.0 C963.3 255.6 988.5 258.0 1010.0 258.3 C1031.5 258.6 1057.7 258.5 1080.0 257.0 C1102.3 255.5 1124.5 251.8 1144.0 249.5 C1163.5 247.2 1179.3 244.7 1197.0 243.0 C1214.7 241.3 1232.2 240.0 1250.0 239.6 C1267.8 239.2 1287.8 239.5 1304.0 240.4 C1320.2 241.3 1333.7 243.8 1347.0 245.0 C1360.3 246.2 1370.2 246.7 1384.0 247.6 C1397.8 248.5 1412.5 250.2 1430.0 250.5 C1447.5 250.8 1472.0 249.8 1489.0 249.5 C1506.0 249.2 1512.3 249.4 1532.0 248.8 C1551.7 248.2 1585.7 246.2 1607.0 246.0 C1628.3 245.8 1646.7 246.4 1660.0 247.6 C1673.3 248.8 1673.7 249.7 1687.0 253.0 C1700.3 256.3 1722.2 261.2 1740.0 267.6 C1757.8 274.1 1778.3 284.4 1794.0 291.7 C1809.7 299.0 1824.2 306.8 1834.0 311.7 C1843.8 316.6 1844.2 315.5 1853.0 321.0 C1861.8 326.5 1875.8 337.3 1887.0 344.6 C1898.2 351.9 1914.5 361.6 1920.0 365.0" fill="none" stroke="#8a6ad8" stroke-width="11.0" stroke-linecap="butt" stroke-linejoin="round"/>
<path d="M1505.5 70.0 C1506.6 76.7 1510.3 96.7 1512.0 110.0 C1513.7 123.3 1515.1 136.7 1515.6 150.0 C1516.1 163.3 1515.6 177.5 1514.8 190.0 C1514.0 202.5 1511.9 215.2 1511.0 225.0 C1510.1 234.8 1510.0 241.0 1509.5 249.0 C1509.0 257.0 1508.4 262.8 1508.0 273.0 C1507.6 283.2 1507.2 303.8 1507.0 310.0" fill="none" stroke="#8a6ad8" stroke-width="11.0" stroke-linecap="butt" stroke-linejoin="round"/>
<path d="M1436.0 560.0 C1436.7 563.3 1437.3 573.0 1440.0 580.0 C1442.7 587.0 1445.8 596.2 1452.0 602.0 C1458.2 607.8 1467.3 611.2 1477.0 614.5 C1486.7 617.8 1499.2 619.6 1510.0 622.0 C1520.8 624.4 1533.3 625.7 1542.0 629.0 C1550.7 632.3 1556.0 637.3 1562.0 642.0 C1568.0 646.7 1573.0 652.5 1578.0 657.0 C1583.0 661.5 1587.5 664.8 1592.0 669.0 C1596.5 673.2 1602.8 679.8 1605.0 682.0" fill="none" stroke="#8a6ad8" stroke-width="11.0" stroke-linecap="butt" stroke-linejoin="round"/>
<path d="M1830.0 766.0 C1837.7 764.5 1861.0 760.2 1876.0 757.0 C1891.0 753.8 1912.7 748.7 1920.0 747.0" fill="none" stroke="#8a6ad8" stroke-width="11.0" stroke-linecap="butt" stroke-linejoin="round"/>
<path d="M1484 249 Q1504 246 1509 226" fill="none" stroke="#8a6ad8" stroke-width="5.500"/>
<path d="M1536 248 Q1516 246 1513 226" fill="none" stroke="#8a6ad8" stroke-width="5.500"/>
<path d="M1484 250 Q1504 254 1506 274" fill="none" stroke="#8a6ad8" stroke-width="5.500"/>
<path d="M1536 250 Q1516 254 1511 274" fill="none" stroke="#8a6ad8" stroke-width="5.500"/>
<path d="M1494 240 L1524 259" fill="none" stroke="#8a6ad8" stroke-width="5.500"/>
<path d="M1524 240 L1494 259" fill="none" stroke="#8a6ad8" stroke-width="5.500"/>
<path d="M1530 249 Q1545 256 1556 250" fill="none" stroke="#8a6ad8" stroke-width="4"/>
<path d="M244 514 L257 509" stroke="#b9a2f2" stroke-width="8"/>
<path d="M936.0 254.5 C938.5 254.6 938.7 254.4 951.0 255.0 C963.3 255.6 988.5 258.0 1010.0 258.3 C1031.5 258.6 1057.7 258.5 1080.0 257.0 C1102.3 255.5 1124.5 251.8 1144.0 249.5 C1163.5 247.2 1179.3 244.7 1197.0 243.0 C1214.7 241.3 1232.2 240.0 1250.0 239.6 C1267.8 239.2 1287.8 239.5 1304.0 240.4 C1320.2 241.3 1333.7 243.8 1347.0 245.0 C1360.3 246.2 1370.2 246.7 1384.0 247.6 C1397.8 248.5 1412.5 250.2 1430.0 250.5 C1447.5 250.8 1472.0 249.8 1489.0 249.5 C1506.0 249.2 1512.3 249.4 1532.0 248.8 C1551.7 248.2 1585.7 246.2 1607.0 246.0 C1628.3 245.8 1646.7 246.4 1660.0 247.6 C1673.3 248.8 1673.7 249.7 1687.0 253.0 C1700.3 256.3 1722.2 261.2 1740.0 267.6 C1757.8 274.1 1778.3 284.4 1794.0 291.7 C1809.7 299.0 1824.2 306.8 1834.0 311.7 C1843.8 316.6 1844.2 315.5 1853.0 321.0 C1861.8 326.5 1875.8 337.3 1887.0 344.6 C1898.2 351.9 1914.5 361.6 1920.0 365.0" fill="none" stroke="#b9a2f2" stroke-width="9.2" stroke-linecap="butt" stroke-linejoin="round"/>
<path d="M1505.5 70.0 C1506.6 76.7 1510.3 96.7 1512.0 110.0 C1513.7 123.3 1515.1 136.7 1515.6 150.0 C1516.1 163.3 1515.6 177.5 1514.8 190.0 C1514.0 202.5 1511.9 215.2 1511.0 225.0 C1510.1 234.8 1510.0 241.0 1509.5 249.0 C1509.0 257.0 1508.4 262.8 1508.0 273.0 C1507.6 283.2 1507.2 303.8 1507.0 310.0" fill="none" stroke="#b9a2f2" stroke-width="9.2" stroke-linecap="butt" stroke-linejoin="round"/>
<path d="M1436.0 560.0 C1436.7 563.3 1437.3 573.0 1440.0 580.0 C1442.7 587.0 1445.8 596.2 1452.0 602.0 C1458.2 607.8 1467.3 611.2 1477.0 614.5 C1486.7 617.8 1499.2 619.6 1510.0 622.0 C1520.8 624.4 1533.3 625.7 1542.0 629.0 C1550.7 632.3 1556.0 637.3 1562.0 642.0 C1568.0 646.7 1573.0 652.5 1578.0 657.0 C1583.0 661.5 1587.5 664.8 1592.0 669.0 C1596.5 673.2 1602.8 679.8 1605.0 682.0" fill="none" stroke="#b9a2f2" stroke-width="9.2" stroke-linecap="butt" stroke-linejoin="round"/>
<path d="M1830.0 766.0 C1837.7 764.5 1861.0 760.2 1876.0 757.0 C1891.0 753.8 1912.7 748.7 1920.0 747.0" fill="none" stroke="#b9a2f2" stroke-width="9.2" stroke-linecap="butt" stroke-linejoin="round"/>
<path d="M1484 249 Q1504 246 1509 226" fill="none" stroke="#b9a2f2" stroke-width="4"/>
<path d="M1536 248 Q1516 246 1513 226" fill="none" stroke="#b9a2f2" stroke-width="4"/>
<path d="M1484 250 Q1504 254 1506 274" fill="none" stroke="#b9a2f2" stroke-width="4"/>
<path d="M1536 250 Q1516 254 1511 274" fill="none" stroke="#b9a2f2" stroke-width="4"/>
<path d="M1494 240 L1524 259" fill="none" stroke="#b9a2f2" stroke-width="4"/>
<path d="M1524 240 L1494 259" fill="none" stroke="#b9a2f2" stroke-width="4"/>
<path d="M1530 249 Q1545 256 1556 250" fill="none" stroke="#b9a2f2" stroke-width="2.600"/>
<path d="M246 326 L257 343" stroke="#b5b5b5" stroke-width="2"/>
<path d="M930.0 733.0 C939.8 739.3 968.7 757.8 989.0 771.0 C1009.3 784.2 1039.2 803.5 1052.0 812.0 C1064.8 820.5 1062.3 818.0 1066.0 822.0 C1069.7 826.0 1072.0 830.8 1074.0 836.0 C1076.0 841.2 1077.7 847.3 1078.0 853.0 C1078.3 858.7 1077.3 864.5 1076.0 870.0 C1074.7 875.5 1072.3 879.0 1070.0 886.0 C1067.7 893.0 1064.2 903.0 1062.0 912.0 C1059.8 921.0 1057.8 935.3 1057.0 940.0" fill="none" stroke="#adadad" stroke-width="2.600"/>
<path d="M930.0 733.0 C939.8 739.3 968.7 757.8 989.0 771.0 C1009.3 784.2 1039.2 803.5 1052.0 812.0 C1064.8 820.5 1062.3 818.0 1066.0 822.0 C1069.7 826.0 1072.0 830.8 1074.0 836.0 C1076.0 841.2 1077.7 847.3 1078.0 853.0 C1078.3 858.7 1077.3 864.5 1076.0 870.0 C1074.7 875.5 1072.3 879.0 1070.0 886.0 C1067.7 893.0 1064.2 903.0 1062.0 912.0 C1059.8 921.0 1057.8 935.3 1057.0 940.0" fill="none" stroke="#ffffff" stroke-width="1.300" stroke-dasharray="6 6"/>
<path d="M376.0 860.0 C377.0 865.0 380.3 881.2 382.0 890.0 C383.7 898.8 385.0 904.7 386.0 913.0 C387.0 921.3 387.7 935.5 388.0 940.0" fill="none" stroke="#bdbdbd" stroke-width="1.500"/>
<rect x="1080.4" y="252.0" width="24" height="11" rx="2.500" fill="#9a6cf5" stroke="#7d4fe0" stroke-width="1"/><text x="1092.4" y="261.0" font-size="9.500" font-weight="700" fill="#fff" text-anchor="middle" letter-spacing=".3">G20</text>
<rect x="1346.4" y="240.0" width="24" height="11" rx="2.500" fill="#9a6cf5" stroke="#7d4fe0" stroke-width="1"/><text x="1358.4" y="249.0" font-size="9.500" font-weight="700" fill="#fff" text-anchor="middle" letter-spacing=".3">G20</text>
<rect x="1427.2" y="244.0" width="24" height="11" rx="2.500" fill="#9a6cf5" stroke="#7d4fe0" stroke-width="1"/><text x="1439.2" y="253.0" font-size="9.500" font-weight="700" fill="#fff" text-anchor="middle" letter-spacing=".3">G20</text>
<rect x="1498.3" y="205.0" width="24" height="12" rx="2.500" fill="#9a6cf5" stroke="#7d4fe0" stroke-width="1"/><text x="1510.3" y="214.5" font-size="9.500" font-weight="700" fill="#fff" text-anchor="middle" letter-spacing=".3">G 2</text>
<rect x="961.2" y="846.5" width="27" height="12" rx="2.500" fill="#f0703c" stroke="#d9531e" stroke-width="1"/><text x="974.7" y="856.0" font-size="9.500" font-weight="700" fill="#fff" text-anchor="middle" letter-spacing=".3">G309</text>
<text x="1206.0" y="113.0" font-size="12" fill="#5c5c5c" text-anchor="middle" stroke="#fff" stroke-width="2.500" paint-order="stroke" stroke-linejoin="round" >王兴村</text>
<text x="985.6" y="168.3" font-size="12" fill="#5c5c5c" text-anchor="middle" stroke="#fff" stroke-width="2.500" paint-order="stroke" stroke-linejoin="round" >卞庄</text>
<text x="1113.0" y="169.9" font-size="12" fill="#5c5c5c" text-anchor="middle" stroke="#fff" stroke-width="2.500" paint-order="stroke" stroke-linejoin="round" >张庙村</text>
<text x="1263.0" y="160.6" font-size="12" fill="#5c5c5c" text-anchor="middle" stroke="#fff" stroke-width="2.500" paint-order="stroke" stroke-linejoin="round" >张公店村</text>
<text x="1328.0" y="194.0" font-size="12" fill="#5c5c5c" text-anchor="middle" stroke="#fff" stroke-width="2.500" paint-order="stroke" stroke-linejoin="round" >丁屯村</text>
<text x="1253.0" y="216.7" font-size="12" fill="#5c5c5c" text-anchor="middle" stroke="#fff" stroke-width="2.500" paint-order="stroke" stroke-linejoin="round" >谷家村</text>
<text x="1160.0" y="227.6" font-size="12" fill="#5c5c5c" text-anchor="middle" stroke="#fff" stroke-width="2.500" paint-order="stroke" stroke-linejoin="round" >后吴</text>
<text x="1018.7" y="243.1" font-size="12" fill="#5c5c5c" text-anchor="middle" stroke="#fff" stroke-width="2.500" paint-order="stroke" stroke-linejoin="round" >东营</text>
<text x="1180.5" y="278.6" font-size="12" fill="#5c5c5c" text-anchor="middle" stroke="#fff" stroke-width="2.500" paint-order="stroke" stroke-linejoin="round" >前吴村</text>
<text x="1001.6" y="310.1" font-size="12" fill="#5c5c5c" text-anchor="middle" stroke="#fff" stroke-width="2.500" paint-order="stroke" stroke-linejoin="round" >小敬庄</text>
<text x="1547.0" y="87.1" font-size="12" fill="#5c5c5c" text-anchor="middle" stroke="#fff" stroke-width="2.500" paint-order="stroke" stroke-linejoin="round" >武大村</text>
<text x="1646.5" y="105.8" font-size="12" fill="#5c5c5c" text-anchor="middle" stroke="#fff" stroke-width="2.500" paint-order="stroke" stroke-linejoin="round" >青宁村</text>
<text x="1692.4" y="119.2" font-size="12" fill="#5c5c5c" text-anchor="middle" stroke="#fff" stroke-width="2.500" paint-order="stroke" stroke-linejoin="round" >谷庙村</text>
<text x="1747.0" y="109.8" font-size="12" fill="#5c5c5c" text-anchor="middle" stroke="#fff" stroke-width="2.500" paint-order="stroke" stroke-linejoin="round" >高道</text>
<text x="1547.0" y="149.6" font-size="12" fill="#5c5c5c" text-anchor="middle" stroke="#fff" stroke-width="2.500" paint-order="stroke" stroke-linejoin="round" >李大村</text>
<text x="1757.0" y="145.9" font-size="12" fill="#5c5c5c" text-anchor="middle" stroke="#fff" stroke-width="2.500" paint-order="stroke" stroke-linejoin="round" >东万村</text>
<text x="1595.7" y="179.0" font-size="12" fill="#5c5c5c" text-anchor="middle" stroke="#fff" stroke-width="2.500" paint-order="stroke" stroke-linejoin="round" >路寨村</text>
<text x="1709.0" y="186.5" font-size="12" fill="#5c5c5c" text-anchor="middle" stroke="#fff" stroke-width="2.500" paint-order="stroke" stroke-linejoin="round" >北赵村</text>
<text x="1614.0" y="235.1" font-size="12" fill="#5c5c5c" text-anchor="middle" stroke="#fff" stroke-width="2.500" paint-order="stroke" stroke-linejoin="round" >孙大村</text>
<text x="1766.0" y="242.0" font-size="12" fill="#5c5c5c" text-anchor="middle" stroke="#fff" stroke-width="2.500" paint-order="stroke" stroke-linejoin="round" >义和村</text>
<text x="1810.5" y="238.6" font-size="12" fill="#5c5c5c" text-anchor="middle" stroke="#fff" stroke-width="2.500" paint-order="stroke" stroke-linejoin="round" >范铺村</text>
<text x="1701.0" y="259.4" font-size="12" fill="#5c5c5c" text-anchor="middle" stroke="#fff" stroke-width="2.500" paint-order="stroke" stroke-linejoin="round" >崔寨立交</text>
<text x="1754.4" y="299.5" font-size="12" fill="#5c5c5c" text-anchor="middle" stroke="#fff" stroke-width="2.500" paint-order="stroke" stroke-linejoin="round" >小史家坞</text>
<text x="1795.3" y="315.8" font-size="12" fill="#5c5c5c" text-anchor="middle" stroke="#fff" stroke-width="2.500" paint-order="stroke" stroke-linejoin="round" >史家坞村</text>
<text x="1564.0" y="302.7" font-size="12" fill="#5c5c5c" text-anchor="middle" stroke="#fff" stroke-width="2.500" paint-order="stroke" stroke-linejoin="round" >前街村</text>
<text x="968.6" y="361.9" font-size="12" fill="#5c5c5c" text-anchor="middle" stroke="#fff" stroke-width="2.500" paint-order="stroke" stroke-linejoin="round" >蒋家村</text>
<text x="1041.6" y="366.0" font-size="12" fill="#5c5c5c" text-anchor="middle" stroke="#fff" stroke-width="2.500" paint-order="stroke" stroke-linejoin="round" >太平</text>
<text x="946.0" y="403.7" font-size="12" fill="#5c5c5c" text-anchor="middle" stroke="#fff" stroke-width="2.500" paint-order="stroke" stroke-linejoin="round" >元店</text>
<text x="1251.4" y="603.8" font-size="12" fill="#5c5c5c" text-anchor="middle" stroke="#fff" stroke-width="2.500" paint-order="stroke" stroke-linejoin="round" >山后陈家</text>
<text x="1415.0" y="618.8" font-size="12" fill="#5c5c5c" text-anchor="middle" stroke="#fff" stroke-width="2.500" paint-order="stroke" stroke-linejoin="round" >韩家村</text>
<text x="1046.0" y="659.3" font-size="12" fill="#5c5c5c" text-anchor="middle" stroke="#fff" stroke-width="2.500" paint-order="stroke" stroke-linejoin="round" >小盖</text>
<text x="1657.4" y="372.5" font-size="12" fill="#5c5c5c" text-anchor="middle" stroke="#fff" stroke-width="2.500" paint-order="stroke" stroke-linejoin="round" >天兴村</text>
<text x="1848.0" y="415.9" font-size="12" fill="#5c5c5c" text-anchor="middle" stroke="#fff" stroke-width="2.500" paint-order="stroke" stroke-linejoin="round" >王家村</text>
<text x="1918.0" y="405.8" font-size="12" fill="#5c5c5c" text-anchor="middle" stroke="#fff" stroke-width="2.500" paint-order="stroke" stroke-linejoin="round" >马家</text>
<text x="1643.0" y="465.3" font-size="12" fill="#5c5c5c" text-anchor="middle" stroke="#fff" stroke-width="2.500" paint-order="stroke" stroke-linejoin="round" >大兴村</text>
<text x="1612.0" y="503.2" font-size="12" fill="#5c5c5c" text-anchor="middle" stroke="#fff" stroke-width="2.500" paint-order="stroke" stroke-linejoin="round" >周孟村</text>
<text x="1830.7" y="489.3" font-size="12" fill="#5c5c5c" text-anchor="middle" stroke="#fff" stroke-width="2.500" paint-order="stroke" stroke-linejoin="round" >南河套</text>
<text x="1863.0" y="528.7" font-size="12" fill="#5c5c5c" text-anchor="middle" stroke="#fff" stroke-width="2.500" paint-order="stroke" stroke-linejoin="round" >小河套</text>
<text x="1746.0" y="574.3" font-size="12" fill="#5c5c5c" text-anchor="middle" stroke="#fff" stroke-width="2.500" paint-order="stroke" stroke-linejoin="round" >云家</text>
<text x="1695.0" y="597.3" font-size="12" fill="#5c5c5c" text-anchor="middle" stroke="#fff" stroke-width="2.500" paint-order="stroke" stroke-linejoin="round" >霍家流村</text>
<text x="1621.0" y="620.9" font-size="12" fill="#5c5c5c" text-anchor="middle" stroke="#fff" stroke-width="2.500" paint-order="stroke" stroke-linejoin="round" >新开店村</text>
<text x="1680.5" y="632.3" font-size="12" fill="#5c5c5c" text-anchor="middle" stroke="#fff" stroke-width="2.500" paint-order="stroke" stroke-linejoin="round" >刘姑店村</text>
<text x="1760.0" y="661.3" font-size="12" fill="#5c5c5c" text-anchor="middle" stroke="#fff" stroke-width="2.500" paint-order="stroke" stroke-linejoin="round" >朱家桥村</text>
<text x="1852.0" y="661.3" font-size="12" fill="#5c5c5c" text-anchor="middle" stroke="#fff" stroke-width="2.500" paint-order="stroke" stroke-linejoin="round" >朱家</text>
<text x="250.6" y="259.7" font-size="12" fill="#5c5c5c" text-anchor="middle" stroke="#fff" stroke-width="2.500" paint-order="stroke" stroke-linejoin="round" >蔡</text>
<text x="253.4" y="369.9" font-size="12" fill="#5c5c5c" text-anchor="middle" stroke="#fff" stroke-width="2.500" paint-order="stroke" stroke-linejoin="round" >核</text>
<text x="463.0" y="880.0" font-size="12" fill="#5c5c5c" text-anchor="middle" stroke="#fff" stroke-width="2.500" paint-order="stroke" stroke-linejoin="round" >段家庄村</text>
<text x="388.7" y="890.3" font-size="12" fill="#5c5c5c" text-anchor="middle" stroke="#fff" stroke-width="2.500" paint-order="stroke" stroke-linejoin="round" >范家庄村</text>
<text x="281.0" y="919.8" font-size="12" fill="#5c5c5c" text-anchor="middle" stroke="#fff" stroke-width="2.500" paint-order="stroke" stroke-linejoin="round" >邱家庄村</text>
<text x="1849.0" y="835.3" font-size="12" fill="#5c5c5c" text-anchor="middle" stroke="#fff" stroke-width="2.500" paint-order="stroke" stroke-linejoin="round" >水沟</text>
<text x="1843.5" y="697.3" font-size="12" fill="#5c5c5c" text-anchor="middle" stroke="#fff" stroke-width="2.500" paint-order="stroke" stroke-linejoin="round" >四</text>
<text x="1866.0" y="919.3" font-size="12" fill="#5c5c5c" text-anchor="middle" stroke="#fff" stroke-width="2.500" paint-order="stroke" stroke-linejoin="round" >苏家庄</text>
<text x="1852.7" y="123.7" font-size="12" fill="#5c5c5c" text-anchor="middle" stroke="#fff" stroke-width="2.500" paint-order="stroke" stroke-linejoin="round" >刘村</text>
<text x="1921.0" y="126.3" font-size="12" fill="#5c5c5c" text-anchor="middle" stroke="#fff" stroke-width="2.500" paint-order="stroke" stroke-linejoin="round" >村</text>
<text x="1188.0" y="679.3" font-size="12" fill="#5c5c5c" text-anchor="middle" stroke="#fff" stroke-width="2.500" paint-order="stroke" stroke-linejoin="round" >乔家庄</text>
<text x="1312.0" y="942.3" font-size="12" fill="#5c5c5c" text-anchor="middle" stroke="#fff" stroke-width="2.500" paint-order="stroke" stroke-linejoin="round" >高家</text>
<text x="593.0" y="942.3" font-size="12" fill="#5c5c5c" text-anchor="middle" stroke="#fff" stroke-width="2.500" paint-order="stroke" stroke-linejoin="round" >大三桥</text>
<text x="1402.0" y="83.3" font-size="12" fill="#5c5c5c" text-anchor="start" stroke="#fff" stroke-width="2.500" paint-order="stroke" stroke-linejoin="round" >张仙寨村</text>
<text x="988.4" y="640.5" font-size="12" fill="#27457a" text-anchor="middle" stroke="#fff" stroke-width="2.500" paint-order="stroke" stroke-linejoin="round" >天桥区鹊</text>
<text x="994.7" y="654.3" font-size="12" fill="#27457a" text-anchor="middle" stroke="#fff" stroke-width="2.500" paint-order="stroke" stroke-linejoin="round" >华中学</text>
<rect x="1017.500" y="639" width="8" height="7" fill="#555"/>
<text x="1893.0" y="820.3" font-size="12" fill="#4a6fb0" text-anchor="start" stroke="#fff" stroke-width="2.500" paint-order="stroke" stroke-linejoin="round" >工舍人</text>
<text x="1893.0" y="832.3" font-size="12" fill="#4a6fb0" text-anchor="start" stroke="#fff" stroke-width="2.500" paint-order="stroke" stroke-linejoin="round" >实验中</text>
<rect x="1880.500" y="818.500" width="8" height="7" fill="#777"/>
<text x="943.4" y="259.7" font-size="13" fill="#7d55e0" text-anchor="middle" stroke="#fff" stroke-width="2.500" paint-order="stroke" stroke-linejoin="round" >速</text>
<text x="1508.0" y="274.7" font-size="13" fill="#7d55e0" text-anchor="middle" stroke="#fff" stroke-width="2.500" paint-order="stroke" stroke-linejoin="round" >京</text>
<text x="1508.0" y="288.7" font-size="13" fill="#7d55e0" text-anchor="middle" stroke="#fff" stroke-width="2.500" paint-order="stroke" stroke-linejoin="round" >沪</text>
<text x="1508.0" y="302.7" font-size="13" fill="#7d55e0" text-anchor="middle" stroke="#fff" stroke-width="2.500" paint-order="stroke" stroke-linejoin="round" >高</text>
<text x="1594.0" y="667.7" font-size="13" fill="#7d55e0" text-anchor="middle" stroke="#fff" stroke-width="2.500" paint-order="stroke" stroke-linejoin="round" transform="rotate(38 1594 663)">京沪</text>
<text x="1911.0" y="748.2" font-size="13" fill="#7d55e0" text-anchor="middle" stroke="#fff" stroke-width="2.500" paint-order="stroke" stroke-linejoin="round" >济</text>
<text x="816.0" y="941.7" font-size="13" fill="#7d55e0" text-anchor="middle" stroke="#fff" stroke-width="2.500" paint-order="stroke" stroke-linejoin="round" >高清</text>
<text x="253.4" y="187.0" font-size="13" fill="#7d55e0" text-anchor="middle" stroke="#fff" stroke-width="2.500" paint-order="stroke" stroke-linejoin="round" >高</text>
<text x="1869.3" y="217.3" font-size="12" fill="#2e8bc0" text-anchor="middle" stroke="#fff" stroke-width="2.500" paint-order="stroke" stroke-linejoin="round" >黄</text>
<text x="1873.3" y="250.6" font-size="12" fill="#2e8bc0" text-anchor="middle" stroke="#fff" stroke-width="2.500" paint-order="stroke" stroke-linejoin="round" >河</text>
<path d="M556.0 860.0 L556.0 940.0" fill="none" stroke="#f5222d" stroke-width="1.8" stroke-dasharray="9 5"/>
<path d="M244 890 L266 866 L270 860" fill="none" stroke="#f5222d" stroke-width="2"/>
<path d="M244 906 L255 895 L268 862" fill="none" stroke="#22e022" stroke-width="2"/>
<path d="M257 480 L247.500 518 L245.500 540" fill="none" stroke="#f5222d" stroke-width="3"/>
<path d="M257 500 L249 534 L245.500 568 M245.500 643 L257 698" fill="none" stroke="#ff3aa8" stroke-width="2.200"/>
<path d="M1866.0 193.0 L1874.0 194.0 L1871.0 220.0 L1877.0 241.0 L1883.0 262.0 L1881.0 284.0 L1858.0 310.0 L1847.0 320.0 L1822.0 350.0 L1803.0 373.0 L1790.0 397.0 L1749.0 455.0 L1713.0 511.0 L1687.0 549.0 L1659.0 556.0 L1658.5 577.0 L1643.0 576.0 L1642.5 571.0 L1635.0 571.0 L1637.0 560.0 L1590.0 568.0 L1560.0 578.0 L1530.0 590.0 L1515.0 604.0 L1507.0 625.0 L1501.0 645.0 L1481.0 667.0 L1466.0 682.0" fill="none" stroke="#ff3aa8" stroke-width="2.200" stroke-linejoin="round"/>
<path d="M1874 194 L1914 201 L1920 187 M1914 201 L1913 214 L1920 217" fill="none" stroke="#ff3aa8" stroke-width="2.200"/>
<path d="M779 860 L780 871 L798 891 L831 916.500 L889 917.300 L893 924 L940 924.600 L974 929.400 L1059 926.400 L1140 927.200" fill="none" stroke="#22e022" stroke-width="2.200" stroke-linejoin="round"/>
<path d="M772 860 L776 866 L794 884 L867 912 L893 911 L894.500 922 L940 927.500 L971 931.500 L1060 929 L1140 930" fill="none" stroke="#ff3aa8" stroke-width="2.200" stroke-linejoin="round"/>
<path d="M612 858 L620 866 L645 876 L660 872 L664 860" fill="none" stroke="#22e022" stroke-width="2"/>
<path d="M606 858 L616 866 L645 873 L658 868 L662 858" fill="none" stroke="#ff3aa8" stroke-width="2"/>
<path d="M1830 756 L1876 744 L1920 732" fill="none" stroke="#22e022" stroke-width="2.200"/>
<path d="M936.0 178.0 C943.8 180.9 967.2 190.3 983.0 195.5 C998.8 200.7 1018.5 206.3 1031.0 209.0 C1043.5 211.7 1047.2 213.4 1058.0 211.6 C1068.8 209.8 1083.5 202.4 1096.0 198.0 C1108.5 193.6 1122.3 190.0 1133.0 185.0 C1143.7 180.0 1150.7 173.8 1160.0 168.0 C1169.3 162.2 1177.3 154.2 1189.0 150.0 C1200.7 145.8 1215.7 145.0 1230.0 143.0 C1244.3 141.0 1259.2 137.2 1275.0 138.0 C1290.8 138.8 1311.7 143.5 1325.0 147.5 C1338.3 151.5 1345.7 157.1 1355.0 162.0 C1364.3 166.9 1375.5 172.7 1381.0 177.0 C1386.5 181.3 1387.0 180.8 1388.0 188.0 C1389.0 195.2 1387.7 208.5 1387.0 220.0 C1386.3 231.5 1385.0 243.7 1384.0 257.0 C1383.0 270.3 1381.5 292.8 1381.0 300.0" fill="none" stroke="#f5222d" stroke-width="1.8" stroke-dasharray="9 5"/>
<path d="M1870.0 300.0 C1865.3 304.0 1851.2 315.0 1842.0 324.0 C1832.8 333.0 1823.8 343.8 1815.0 354.0 C1806.2 364.2 1797.3 374.0 1789.0 385.0 C1780.7 396.0 1772.3 408.5 1765.0 420.0 C1757.7 431.5 1755.2 437.5 1745.0 454.0 C1734.8 470.5 1714.2 503.8 1704.0 519.0 C1693.8 534.2 1691.3 539.5 1684.0 545.0 C1676.7 550.5 1668.8 549.5 1660.0 552.0 C1651.2 554.5 1644.0 556.8 1631.0 560.0 C1618.0 563.2 1598.2 566.7 1582.0 571.0 C1565.8 575.3 1544.7 581.2 1534.0 586.0 C1523.3 590.8 1522.0 594.2 1518.0 600.0 C1514.0 605.8 1512.8 613.5 1510.0 621.0 C1507.2 628.5 1505.2 637.3 1501.0 645.0 C1496.8 652.7 1490.2 660.8 1485.0 667.0 C1479.8 673.2 1472.5 679.5 1470.0 682.0" fill="none" stroke="#f5222d" stroke-width="1.8" stroke-dasharray="9 5"/>
<path d="M1684.0 545.0 C1686.0 544.2 1692.7 540.5 1696.0 540.0 C1699.3 539.5 1700.7 538.7 1704.0 542.0 C1707.3 545.3 1711.2 553.7 1716.0 560.0 C1720.8 566.3 1722.3 577.3 1733.0 580.0 C1743.7 582.7 1764.5 577.3 1780.0 576.0 C1795.5 574.7 1810.2 574.0 1826.0 572.0 C1841.8 570.0 1859.3 566.8 1875.0 564.0 C1890.7 561.2 1912.5 556.5 1920.0 555.0" fill="none" stroke="#f5222d" stroke-width="1.8" stroke-dasharray="9 5"/>
<path d="M1866.0 193.0 C1870.5 193.8 1884.0 196.2 1893.0 198.0 C1902.0 199.8 1915.5 202.6 1920.0 203.5" fill="none" stroke="#f5222d" stroke-width="1.8" stroke-dasharray="9 5"/>
<path d="M1866.0 195.0 C1865.3 200.8 1862.0 220.8 1862.0 230.0 C1862.0 239.2 1864.0 243.7 1866.0 250.0 C1868.0 256.3 1872.8 262.2 1874.0 268.0 C1875.2 273.8 1875.7 278.8 1873.0 285.0 C1870.3 291.2 1862.7 299.2 1858.0 305.0 C1853.3 310.8 1847.2 317.5 1845.0 320.0" fill="none" stroke="#f5222d" stroke-width="1.8" stroke-dasharray="9 5"/>
<polygon points="1052,302 1636,302 1636,496 1441,496 1441,592.500 957,592.500 957,400 1052,400" fill="#af8aff" stroke="#f2a04c" stroke-width="1.200"/>
<path d="M1381.0 300.0 C1380.3 313.3 1378.3 353.0 1377.0 380.0 C1375.7 407.0 1373.5 436.2 1373.0 462.0 C1372.5 487.8 1372.7 519.3 1374.0 535.0 C1375.3 550.7 1377.2 549.8 1381.0 556.0 C1384.8 562.2 1388.8 566.3 1397.0 572.0 C1405.2 577.7 1422.2 586.0 1430.0 590.0 C1437.8 594.0 1435.7 592.7 1444.0 596.0 C1452.3 599.3 1469.2 605.8 1480.0 610.0 C1490.8 614.2 1504.2 619.2 1509.0 621.0" fill="none" stroke="#f5222d" stroke-width="1.800" stroke-dasharray="9 5"/>
<g fill="none" stroke="#1a73ff" stroke-width="1.300"><circle cx="1095.2" cy="404.7" r="3.500"/><circle cx="1095.2" cy="404.7" r="1.100" fill="#1a73ff" stroke="none"/><path d="M1087.0 396.5 L1090.2 399.7"/><path d="M1091.6 401.1 L1088.0 400.5 L1091.0 397.5 Z" fill="#1a73ff" stroke="none"/><path d="M1087.0 412.9 L1090.2 409.7"/><path d="M1091.6 408.3 L1088.0 408.9 L1091.0 411.9 Z" fill="#1a73ff" stroke="none"/><path d="M1103.4 396.5 L1100.2 399.7"/><path d="M1098.8 401.1 L1102.4 400.5 L1099.4 397.5 Z" fill="#1a73ff" stroke="none"/><path d="M1103.4 412.9 L1100.2 409.7"/><path d="M1098.8 408.3 L1102.4 408.9 L1099.4 411.9 Z" fill="#1a73ff" stroke="none"/></g><text x="1102.8" y="424.3" font-size="25.500" font-weight="300" fill="#2c6ae8" text-anchor="middle" style="font-family:Noto Sans CJK SC,sans-serif">3</text>
<g fill="none" stroke="#1a73ff" stroke-width="1.300"><circle cx="1532.4" cy="404.7" r="3.500"/><circle cx="1532.4" cy="404.7" r="1.100" fill="#1a73ff" stroke="none"/><path d="M1524.2 396.5 L1527.4 399.7"/><path d="M1528.8 401.1 L1525.2 400.5 L1528.2 397.5 Z" fill="#1a73ff" stroke="none"/><path d="M1524.2 412.9 L1527.4 409.7"/><path d="M1528.8 408.3 L1525.2 408.9 L1528.2 411.9 Z" fill="#1a73ff" stroke="none"/><path d="M1540.6 396.5 L1537.4 399.7"/><path d="M1536.0 401.1 L1539.6 400.5 L1536.6 397.5 Z" fill="#1a73ff" stroke="none"/><path d="M1540.6 412.9 L1537.4 409.7"/><path d="M1536.0 408.3 L1539.6 408.9 L1536.6 411.9 Z" fill="#1a73ff" stroke="none"/></g><text x="1540.0" y="424.3" font-size="25.500" font-weight="300" fill="#2c6ae8" text-anchor="middle" style="font-family:Noto Sans CJK SC,sans-serif">3</text>
</svg>

<div id="hdr">
<svg style="position:absolute;left:8px;top:4px" width="48" height="64" viewBox="8 4 48 64">
<defs><clipPath id="dm"><path d="M15.200 19.500C16 11.500 23 7 31 7s15 4.500 15.800 12.500Q31 25 15.200 19.500z"/></clipPath></defs>
<g clip-path="url(#dm)"><rect x="14" y="6" width="34" height="18" fill="#fff"/>
<path d="M26 7h10l-1 2.800h-8z" fill="#2a7a35"/><path d="M20.500 10 24.500 8.500 25.500 12 21.500 13.500zM37.500 8.500 41.500 10 40.500 13.500 36.500 12z" fill="#2a7a35"/>
<path d="M26.500 10.500h4v4h-5z" fill="#2a7a35"/><path d="M32 10.500h4l1 4h-5z" fill="#0e2f7c"/>
<path d="M16.500 15 20.500 13.500 22 17.500 17.500 19z" fill="#2a7a35"/><path d="M41.500 13.500 45.500 15 44.500 19 40 17.500z" fill="#0e2f7c"/>
<path d="M23.500 16h6.500v4.500h-7z" fill="#0e2f7c"/><path d="M32 16h6.500l.5 4.500h-7z" fill="#2a7a35"/></g>
<path d="M14 20.500Q31 27.500 48 20.500 49 33 37 39.500V25.500H25.500L32 29.500V44.500Q13 36 14 20.500z" fill="#0b3a8f"/>
<path d="M25.500 25.500 32 29.500V44.500Q24 40 22 33z" fill="#082c70"/>
<text x="31" y="54" font-size="9.800" font-weight="700" fill="#2b3d63" text-anchor="middle" textLength="39" lengthAdjust="spacingAndGlyphs" style="font-family:'Liberation Sans','Noto Sans CJK SC',sans-serif">山东地矿</text>
<text x="31" y="63.200" font-size="9" font-weight="400" fill="#8391aa" text-anchor="middle" textLength="39" lengthAdjust="spacingAndGlyphs" style="font-family:'Liberation Sans',sans-serif">SDGM</text>
</svg>
<div id="title">济南市地质钻孔数据管理应用服务平台</div>
<div id="nav">
<span style="left:0">钻孔一张图</span>
<span style="left:130px">数据管理</span>
<span style="left:240px">数据统计</span>
<span class="on" style="left:350px">专题服务</span>
<span style="left:476px">定制服务</span>
<span style="left:586px">数据标准</span>
<span style="left:696px">系统管理</span>
<i></i>
</div>
<div id="user">管理员</div>
<svg style="position:absolute;left:1770px;top:27px" width="22" height="24" viewBox="0 0 22 24"><path d="M11 2.200c-4.200 0-6.800 3.200-6.800 7.200v5.600L2 19v1.500h18V19l-2.200-4V9.400c0-4-2.600-7.200-6.800-7.200z" fill="#1677ff"/><path d="M8 22h6l-3 2.200z" fill="#1677ff"/><circle cx="16.500" cy="4.300" r="2.700" fill="#f5302e"/></svg>
<svg style="position:absolute;left:1855px;top:35px" width="11" height="7" viewBox="0 0 11 7"><path d="M0 .500h10.500L5.250 6z" fill="#666"/></svg>
<svg style="position:absolute;left:1882px;top:28px" width="21" height="21" viewBox="0 0 21 21" fill="none" stroke="#6a6a6a" stroke-width="1.700"><path d="M1 6.500V1h5.500M1 1l6.500 6.500M14.500 1H20v5.500M20 1l-6.500 6.500M1 14.500V20h5.500M1 20l6.500-6.500M20 14.500V20h-5.500M20 20l-6.500-6.500"/></svg>
</div>

<div id="side">
<div id="act"></div>
<div id="sub"></div>
<div class="t" style="left:101px;top:15px;font-size:18px;font-weight:700">功能菜单</div>
<div class="t" style="left:57px;top:64px">轨道交通</div><div class="pl" style="top:62px">+</div>
<div class="t" style="left:57px;top:114px">新区规划</div><svg style="position:absolute;left:215px;top:119px" width="11" height="11" viewBox="0 0 11 11" stroke="#fff" stroke-width="2"><title>×</title><path d="M1.500 1.500 9.500 9.500M9.500 1.500 1.500 9.500"/></svg>
<div class="t" style="left:78px;top:167px">工区钻孔数据服务</div>
<div class="t" style="left:78px;top:216px">起步区三维钻孔服务</div>
<div class="t" style="left:78px;top:265px">济阳煤矿应用服务</div>
<div class="t" style="left:57px;top:314px">应急处置</div><div class="pl" style="top:312px">+</div>
<div class="sep" style="top:350px"></div>
<div class="t" style="left:57px;top:364px">重大工程勘查</div><div class="pl" style="top:362px">+</div>
<div class="sep" style="top:399px"></div>
<svg style="position:absolute;left:71px;top:14px" width="23" height="24" viewBox="0 0 23 24" fill="none" stroke="#fff" stroke-width="1.600" stroke-linejoin="round"><path d="M11.500 1.200 20.800 6.400V17L11.500 22.200 2.200 17V6.400z"/><path d="M11.500 20V12.200L5 8.300M11.500 12.200 18 8.300"/></svg>
<svg style="position:absolute;left:205px;top:18px" width="18" height="16" viewBox="0 0 18 16" fill="#fff"><rect x="1" y="1" width="16" height="2.600"/><rect x="7.500" y="6.700" width="9.500" height="2.600"/><rect x="1" y="12.400" width="16" height="2.600"/><path d="M1 8 6 4.800v6.400z"/></svg>
<svg style="position:absolute;left:19px;top:66px" width="16" height="17" viewBox="0 0 16 17" fill="none" stroke="#b9c4df" stroke-width="1.300"><rect x=".8" y=".8" width="14.400" height="13.400"/><path d="M.8 7.200h14.400M8 .8v6.400"/><circle cx="4.300" cy="10.800" r="1.200"/><circle cx="11.700" cy="10.800" r="1.200"/><path d="M0 15.800h16" stroke-width="1.500"/></svg>
<svg style="position:absolute;left:17px;top:118px" width="20" height="13" viewBox="0 0 20 13" fill="none" stroke="#eef1f8" stroke-width="1.400"><path d="M0 1h20M1 4.300h18M3 4.300V10l-2.500 2M17 4.300V10l2.500 2M7.700 4.300v6M12.300 4.300v6M3 10.300h14"/></svg>
<svg style="position:absolute;left:17px;top:316px" width="21" height="19" viewBox="0 0 21 19" fill="none" stroke="#dfe5f2" stroke-width="1.400" stroke-linejoin="round"><path d="M8 17.500H3Q1 17.500 1 15.500V3Q1 1 3 1h11Q16 1 16 3v4"/><path d="M4.500 6h8M4.500 9.500h6M4.500 13h3.500"/><path d="M15 8.500 20 17.500H10z"/><path d="M15 12v2.800" stroke-width="1.200"/></svg>
<svg style="position:absolute;left:17px;top:365px" width="20" height="19" viewBox="0 0 20 19" fill="none" stroke="#eef1f8" stroke-width="1.300"><path d="M0 18.300h20M2.500 18V7.500L9 5.500M9 18V2l3.500-1.200L17 2v16"/><path d="M4.500 10v7M6.700 9.500v7.500M11 4v13M13 3.500v13.500M15 4v13M3 11h5M3 13.500h5M3 16h5M9.500 5.500h7M9.500 8.500h7M9.500 11.500h7M9.500 14.500h7" stroke-width=".9"/></svg>
</div>

<div class="panel" id="p1">

<div class="h" style="top:20px"><svg width="18" height="20" viewBox="0 0 18 20" fill="none" stroke="currentColor" stroke-width="1.5" stroke-linejoin="round"><path d="M1.700 4.900 8.900 1l7.200 3.900-7.200 3.500zM.900 7.400l6.900 3.900v7.300L.900 14.800zM10 11.300l7.100-3.900v7.400L10 18.600z"/></svg><span>工区选择</span></div>
<svg style="position:absolute;left:284px;top:25px" width="22" height="12" viewBox="0 0 22 12" fill="none" stroke="#4a5a7a" stroke-width="1.6"><path d="M1.500 11 11 1.500 20.500 11"/></svg>
<ul id="lst"><li><i style="background:#d2ffbe"></i>齐鲁大道北延跨黄河通道工程<span style="font-family:'Liberation Mono',monospace;margin:0 -1.500px;line-height:0">I</span>标段初勘</li><li class="on"><i style="background:#ae8aff"></i>山东省黄河北煤田济阳煤矿</li><li><i style="background:#7a00ff"></i>山东省济南市北跨区地面沉降调查评价报告</li><li><i style="background:#efffc8"></i>济南新旧动能转换先行区崔寨片区地质灾害危险性评估</li><li><i style="background:#dcffe6"></i>山东重工集团高端装备制造产业园项目初勘</li><li><i style="background:#dcdcdc"></i>济南新旧动能转换先行区地下空间资源调查</li><li><i style="background:#efc8ff"></i>先行区浅层地温能</li><li><i style="background:#74f000"></i>山东省1:50000水文地质调查济阳县幅（J50E019013）</li><li><i style="background:#ffcda0"></i>山东省1:50000水文地质调查历城幅（J50E020013）</li></ul>
<div class="h" style="top:463px;color:#7284ab"><svg style="top:3.500px" width="18" height="20" viewBox="0 0 18 20" fill="none" stroke="currentColor" stroke-width="1.5" stroke-linejoin="round"><path d="M1.700 4.900 8.900 1l7.200 3.900-7.200 3.500zM.900 7.400l6.900 3.900v7.300L.900 14.800zM10 11.300l7.100-3.900v7.400L10 18.600z"/></svg><span>坐标选区查询</span></div>
<svg style="position:absolute;left:286px;top:466px" width="18" height="18" viewBox="0 0 18 18" fill="none" stroke="#5d6f95" stroke-width="1.300"><path d="M.500 4h17M6.500 4V2.200h5V4M3.200 4.200V14.500Q3.200 16 4.700 16h8.600Q14.800 16 14.800 14.500V4.200M6.600 7v6.500M9 7v6.500M11.400 7v6.500"/></svg>
<div id="coord">输入坐标:<span class="rad on" style="margin-left:14px"></span>单位：度<span class="rad" style="margin-left:11px"></span>单位：度分秒</div>
<div id="ta"><svg style="position:absolute;right:1px;bottom:1px" width="11" height="11" viewBox="0 0 11 11" stroke="#555" stroke-width="1"><path d="M10.500 1 1 10.500M10.500 6 6 10.500"/></svg></div>
<div id="hint">格式为：经度1 纬度1,经度2 纬度2，...,经度n 纬度n,,经度 纬度之间用空格隔开，坐标对间用逗号隔开,<br>示例坐标：<p>116.99 36.92,116.99 36.50,</p><p>117.44 36.50,117.44 36.67,</p><p>117.21 36.67,117.21 36.92</p></div>
<div id="go">执行查询</div>
<div class="h" style="top:753px"><svg width="18" height="20" viewBox="0 0 18 20" fill="none" stroke="currentColor" stroke-width="1.5" stroke-linejoin="round"><path d="M1.700 4.900 8.900 1l7.200 3.900-7.200 3.500zM.900 7.400l6.900 3.900v7.300L.900 14.800zM10 11.300l7.100-3.900v7.400L10 18.600z"/></svg><span>工区路线查询</span></div>

</div>
<div id="sb1"><b></b></div>
<div class="panel" id="p2">

<svg style="position:absolute;left:12px;top:17px" width="26" height="26" viewBox="0 0 26 26" fill="none" stroke="#62d9f5" stroke-width="1.700" stroke-linecap="round"><path d="M2.400 24.100V4Q2.400 2.300 4.100 2.300H10.800Q12.500 2.300 12.500 4V24.100M5.200 8.750h4.400M5.200 12.100h4.400M5.200 15.500h4.400M12.500 7.100H20.600Q22.300 7.100 22.300 8.800V11.400M1.200 24.100H16"/><circle cx="18.700" cy="17.800" r="4.300"/><path d="M21.800 20.800 24.500 23.400"/></svg>
<div class="hd">查询钻孔总个数：6个</div>
<div class="pill" style="left:202px">导出</div><div class="pill" style="left:250px">查询</div>
<div class="r" style="top:60px"><i></i><a>kong040148</a><span>工程地质钻孔</span></div><div class="r" style="top:89px"><i></i><a>kong040149</a><span>工程地质钻孔</span></div><div class="r" style="top:118px"><i></i><a>kong040150</a><span>工程地质钻孔</span></div><div class="r" style="top:147px"><i></i><a>kong040325</a><span>工程地质钻孔</span></div><div class="r" style="top:176px"><i></i><a>kong040326</a><span>工程地质钻孔</span></div><div class="r" style="top:205px"><i></i><a>kong040327</a><span>工程地质钻孔</span></div>

</div>


<div id="tb">
<div class="ttl">钻孔信息列表</div>
<svg style="position:absolute;left:625px;top:12px" width="70" height="20" viewBox="0 0 70 20" fill="none" stroke="#2d2d2d" stroke-width="1.500"><path d="M2 10.500h14" stroke-width="1.800"/><path d="M28 9V3.500h12.500V16h-5.500M28 11.500h5v5h-5zM34 10 38.500 5.500M35 5.500h3.500V9" stroke-width="1.200"/><path d="M56 5l10 10M66 5 56 15" stroke-width="1.400"/></svg>
<div class="bar">
<div class="btn" style="left:16px;width:56px">列选择</div><div class="btn" style="left:76px;width:68px">下载表格</div><div class="btn" style="left:154px;width:68px">下载附件</div>
<div class="ib" style="left:588px"><svg width="16" height="16" viewBox="0 0 16 16" fill="none" stroke="#666" stroke-width="1.100"><path d="M1.500 1.500h5v4.500h-5zM9.500 1.500h5v4.500h-5zM2 8.500v6M6 8.500v6M10 8.500v6M14 8.500v6"/></svg></div>
<div class="ib" style="left:626px"><svg width="16" height="16" viewBox="0 0 16 16" fill="#333" stroke="none"><path d="M1.500 10h13v4.500h-13zM3 9.500 4.500 7h2v1h-1.300l-.7 1.500zM13 9.500 11.500 7H10v1h.8l.7 1.500z"/><path d="M7 9V6.500Q7 4 10 4V2.500L13 5 10 7.500V6Q8.500 6 8.500 7.500V9z"/></svg></div>
<div class="ib" style="left:664px"><svg width="16" height="16" viewBox="0 0 16 16" fill="none" stroke="#666" stroke-width="1.100"><path d="M4 5V1.500h8V5M4 11.500H1.500V5h13v6.500H12M4 9h8v5.500H4z"/></svg></div>
</div>
<div class="th"><div class="c" style="left:0px;width:50px"><i class="ck" style="position:absolute"></i></div><div class="c" style="left:50px;width:61px">序号</div><div class="c" style="left:111px;width:121px">钻孔编号<i class="srt"></i></div><div class="c" style="left:232px;width:101px">单位区划<i class="srt"></i></div><div class="c" style="left:333px;width:258px">保管单位名称<i class="srt"></i></div></div>
<div class="row" style="top:117px"><div class="c" style="left:0px;width:50px"><i class="ck"></i></div><div class="c" style="left:50px;width:61px">1</div><div class="c" style="left:111px;width:121px"><span class="bl">kong040148</span></div><div class="c" style="left:232px;width:101px">历下区</div><div class="c" style="left:333px;width:258px"><span class="bl">山东省地矿工程勘察院</span></div></div><div class="row" style="top:156px"><div class="c" style="left:0px;width:50px"><i class="ck"></i></div><div class="c" style="left:50px;width:61px">2</div><div class="c" style="left:111px;width:121px"><span class="bl">kong040149</span></div><div class="c" style="left:232px;width:101px">历下区</div><div class="c" style="left:333px;width:258px"><span class="bl">山东省地矿工程勘察院</span></div></div><div class="row" style="top:195px"><div class="c" style="left:0px;width:50px"><i class="ck"></i></div><div class="c" style="left:50px;width:61px">3</div><div class="c" style="left:111px;width:121px"><span class="bl">kong040150</span></div><div class="c" style="left:232px;width:101px">历下区</div><div class="c" style="left:333px;width:258px"><span class="bl">山东省地矿工程勘察院</span></div></div>
<div class="fx"><div style="height:39px;background:#f2f2f2;border-bottom:1px solid #e6e6e6;line-height:38px;padding-left:15px">钻孔区划<i class="srt"></i></div><div style="height:39px;border-bottom:1px solid #e6e6e6"></div><div style="height:39px;border-bottom:1px solid #e6e6e6"></div></div>
<div class="vs"><b></b><i class="tri" style="left:4px;top:1px;border-bottom:5px solid #a3a3a3;border-top:0;top:6px"></i><i class="tri" style="left:4px;bottom:5px;border-top:5px solid #505050;border-bottom:0"></i></div>
<div class="hs"><b></b><i class="tri" style="left:5px;top:4px;border-right:5px solid #505050;border-left:0"></i><i class="tri" style="left:680px;top:4px;border-left:5px solid #505050;border-right:0"></i></div>
<div class="pg">
<svg style="position:absolute;left:170px;top:8px" width="10" height="14" viewBox="0 0 10 14" fill="none" stroke="#d2d2d2" stroke-width="1.300"><path d="M8 1.500 2 7l6 5.500"/></svg>
<div style="left:194px;width:31px;background:#1e7ff5;color:#fff;text-align:center;border-radius:2px">1</div>
<svg style="position:absolute;left:238px;top:8px" width="10" height="14" viewBox="0 0 10 14" fill="none" stroke="#d2d2d2" stroke-width="1.300"><path d="M2 1.500 8 7 2 12.500"/></svg>
<span style="left:263px;color:#999">到第</span>
<div style="left:297px;width:40px;border:1px solid #e6e6e6;border-radius:2px;text-align:center;line-height:24px">1</div>
<span style="left:347px;color:#999">页</span>
<div style="left:369px;width:46px;border:1px solid #e6e6e6;border-radius:2px;text-align:center;line-height:24px">确定</div>
<span style="left:425px">共 6 条</span>
<div style="left:473px;width:75px;border:1px solid #e6e6e6;border-radius:2px;padding-left:7px;line-height:24px">10 条/页<svg style="position:absolute;right:6px;top:9px" width="10" height="7" viewBox="0 0 10 7" fill="none" stroke="#111" stroke-width="1.800"><path d="M1 1 5 5.500 9 1"/></svg></div>
</div>
</div>


<div id="opa">透明度调节</div>
<div class="tl" style="left:1859px;top:88px;height:50px;box-shadow:0 2px 6px rgba(0,0,0,.3)"><svg width="50" height="50" viewBox="0 0 50 50"><path d="M12 31 27 26 38 30 23 36z" fill="#1d86d8"/><path d="M16 31 24 28 30 31 33 29 36 30 24 35z" fill="#2fa24a"/><path d="M20 32q4-3 8 0t6-1" stroke="#f2d23a" stroke-width="1" fill="none"/><path d="M12 26 27 21 38 25 23 31z" fill="#8cc6f0" opacity=".85"/><path d="M12 21 27 16 38 20 23 26z" fill="#c9ced3" opacity=".92"/><g fill="#f04848"><circle cx="20" cy="21" r="1"/><circle cx="27" cy="18.500" r="1"/><circle cx="31" cy="21" r="1"/><circle cx="25" cy="23.500" r="1"/><circle cx="34" cy="20" r=".9"/></g></svg></div>
<div class="tl" style="top:390px;height:50px;background:#0a7bff"><svg width="50" height="50" viewBox="0 0 50 50" fill="none" stroke="#fff" stroke-width="1.600"><path d="M12.800 11.500V36.500H38"/><path d="M17.500 36V28h5v8M22.500 36V15.500h5V36M27.500 36V21h5v15"/></svg></div>
<div class="tl" style="top:471px;height:50px"><svg width="50" height="50" viewBox="0 0 50 50" fill="none" stroke="#0a7bff" stroke-width="2" stroke-linejoin="round"><path d="M23.500 12.500 10.800 34.500H27"/><path d="M23.500 12.500 30 23.800"/><circle cx="32.500" cy="29.500" r="6.800" fill="#fff"/></svg></div>
<div class="tl" style="top:541px;height:54px"><svg width="50" height="54" viewBox="0 0 50 54" fill="none" stroke="#0a7bff" stroke-width="1.800"><circle cx="24.700" cy="22.300" r="6.300"/><circle cx="24.700" cy="22.300" r="2.300"/><path d="M11.500 9 17.500 15M38 9 32 15M11.500 35.500 17.500 29.500M38 35.500 32 29.500"/><g fill="#0a7bff" stroke="none"><path d="M19.500 17 14.200 15.800 18.300 11.700z"/><path d="M30 17 35.300 15.800 31.200 11.700z"/><path d="M19.500 27.600 14.200 28.800 18.300 32.900z"/><path d="M30 27.600 35.300 28.800 31.200 32.900z"/></g></svg><em style="top:37px">聚合</em></div>
<div class="tl" style="top:618px;height:122px"><svg width="50" height="122" viewBox="0 0 50 122" fill="none" stroke="#0a7bff" stroke-width="1.800">
<defs><pattern id="ht" width="6" height="6" patternUnits="userSpaceOnUse" patternTransform="rotate(-45)"><rect width="6" height="2.500" fill="#0a7bff"/></pattern></defs>
<rect x="14" y="10" width="22" height="22" fill="url(#ht)" stroke-width="1.600"/><g fill="#fff" stroke-width="1.400"><rect x="11.500" y="7.500" width="5" height="5"/><rect x="33.500" y="7.500" width="5" height="5"/><rect x="11.500" y="29.500" width="5" height="5"/><rect x="33.500" y="29.500" width="5" height="5"/></g>
<path d="M14 53h22v22h-22zM14 53l22 22" stroke-width="1.600"/><g fill="#fff" stroke-width="1.400"><circle cx="14" cy="53" r="2.300"/><circle cx="36" cy="53" r="2.300"/><circle cx="14" cy="75" r="2.300"/><circle cx="36" cy="75" r="2.300"/></g>
<g transform="translate(25.500 103.500) rotate(45) scale(1.120)" stroke-linejoin="round" stroke-width="1.600"><path d="M-9.500 -1h19v9.500h-19z"/><path d="M-4.500 -1v-4.500h1.500v-7h6v7h1.500v4.500"/><path d="M-5.500 8.500v-4M-1.800 8.500v-5.500M1.800 8.500v-4M5.500 8.500v-5.500" stroke-width="1.300"/></g>
</svg></div>
<div class="tl" style="top:761px;height:54px"><svg width="50" height="54" viewBox="0 0 50 54" fill="none" stroke="#0a7bff" stroke-width="2.200"><path d="M14.500 12A13 13 0 1 1 11.700 21.500"/><path d="M13.200 7.500v6.500h7" stroke-width="2"/><circle cx="24.700" cy="20.700" r="3.300" fill="#0a7bff" stroke="none"/></svg><em style="top:38px">复位</em></div>
<div class="tl" style="top:836px;height:55px"><svg width="50" height="55" viewBox="0 0 50 55" fill="none" stroke="#0a7bff" stroke-width="2" stroke-linejoin="round"><path d="M25 7 38 14 25 21 12 14z"/><path d="M12 20.500 25 27.500 38 20.500M12 26.500 25 33.500 38 26.500"/></svg><em style="top:38px">底图</em></div>
<div class="zm p" style="left:1854px"></div><div class="zm" style="left:1879px"></div>
<div style="position:absolute;left:1910px;top:911px;width:10px;height:25px;background:#585e6c;z-index:11;border-radius:3px 0 0 0"></div>

</body>
</html>
